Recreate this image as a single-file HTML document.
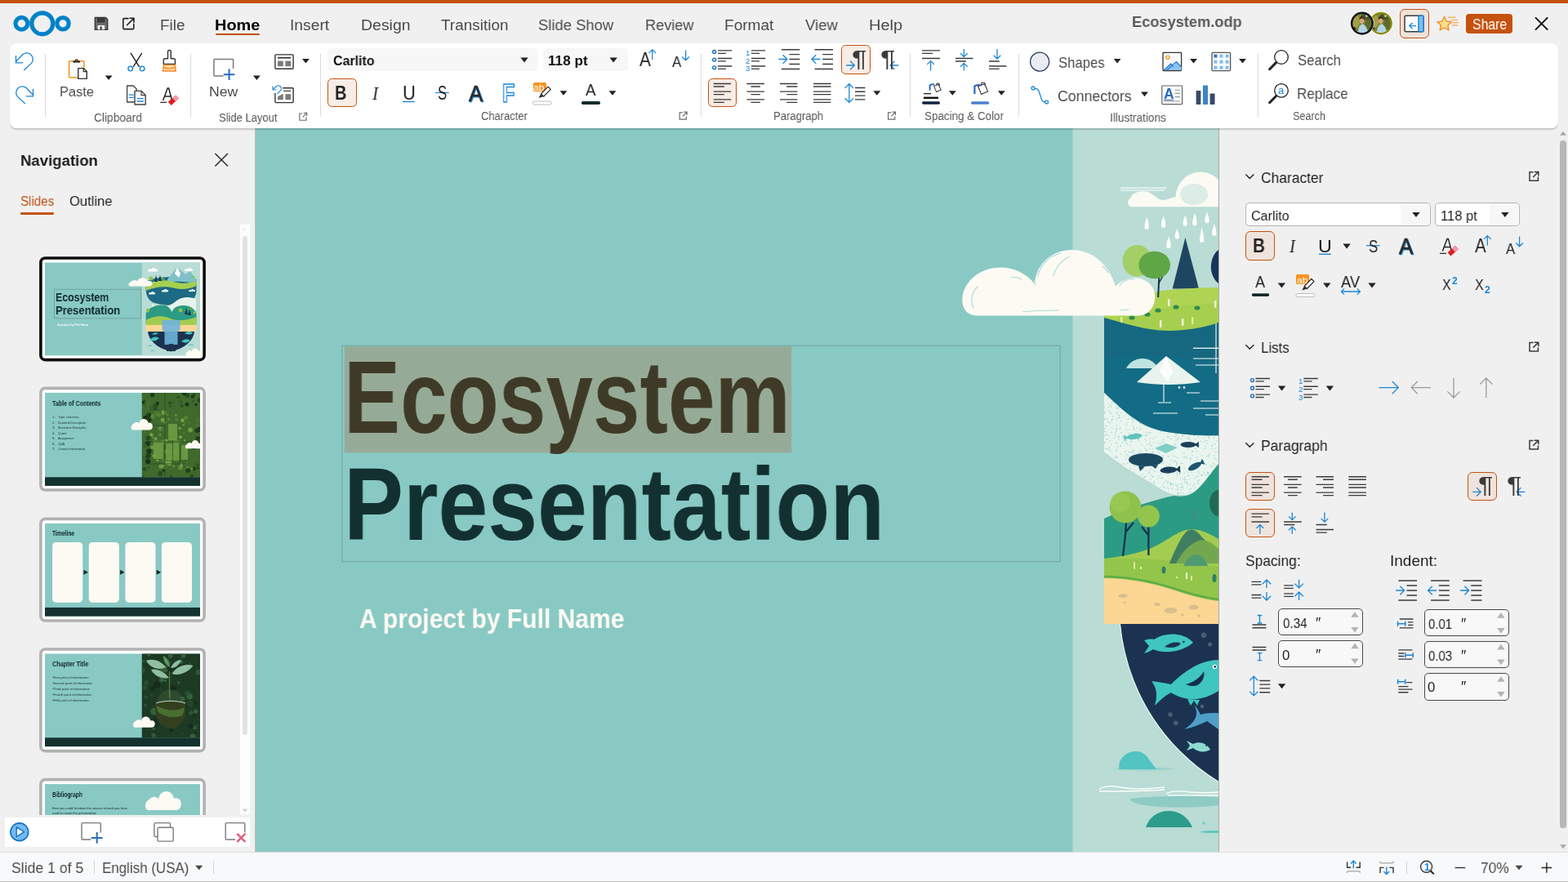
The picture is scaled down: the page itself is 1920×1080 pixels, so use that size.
<!DOCTYPE html>
<html lang="en"><head><meta charset="utf-8"><title>Ecosystem.odp</title>
<style>
html,body{margin:0;padding:0;}
body{width:1920px;height:1080px;overflow:hidden;background:#f0f0f0;position:relative;font-family:"Liberation Sans",sans-serif;}
.b{position:absolute;}
.t{position:absolute;white-space:nowrap;line-height:1;transform-origin:0 50%;z-index:10;will-change:transform;}
svg.ov{position:absolute;left:0;top:0;z-index:9;pointer-events:none;}
</style></head><body>
<div class="b" style="left:313px;top:157px;width:1179px;height:886px;overflow:hidden;background:#89c9c4;">
<svg width="1179" height="886" viewBox="313 157 1179 886" style="position:absolute;left:0;top:0;">
<rect x="1313.5" y="157" width="180" height="886" fill="#b9dcd5"/>
<g>
<path d="M1372 230.2h56.500M1372 233.200h54" stroke="#fff" stroke-width="1.200" fill="none" opacity=".85"/>
<path d="M1385.500 253.200c-5-.500-6-7-1.500-10.500c3-8 16-11 25-6c5 3 10 8 15.500 8.500c4 0 9-3.500 15-4c1-17 14-30.800 30-30.800c9 0 17 4 23 10v32.800z" fill="#fbfaf3"/>
<ellipse cx="1462" cy="238" rx="17" ry="13" fill="#cfe6e0" opacity=".7"/>
<path d="M1404.2 265.8c1.4 4.6 2.7 7.6 2.7 12.5a2.7 2.7 0 0 1 -5.4 0c0 -4.6 1.3 -7.6 2.7 -12.5z" fill="#fdfdf8"/>
<path d="M1424.6 264.3c1.4 4.4 2.7 7.3 2.7 12.0a2.7 2.7 0 0 1 -5.4 0c0 -4.4 1.3 -7.3 2.7 -12.0z" fill="#fdfdf8"/>
<path d="M1451.2 263.5c1.4 4.0 2.7 6.8 2.7 10.8a2.7 2.7 0 0 1 -5.4 0c0 -4.0 1.3 -6.8 2.7 -10.8z" fill="#fdfdf8"/>
<path d="M1462.9 260.4c1.4 4.8 2.7 8.1 2.7 13.4a2.7 2.7 0 0 1 -5.4 0c0 -4.8 1.3 -8.1 2.7 -13.4z" fill="#fdfdf8"/>
<path d="M1478 259.6c1.4 4.1 2.7 6.8 2.7 10.9a2.7 2.7 0 0 1 -5.4 0c0 -4.1 1.3 -6.8 2.7 -10.9z" fill="#fdfdf8"/>
<path d="M1486.8 274c1.4 4.4 2.7 7.4 2.7 12.1a2.7 2.7 0 0 1 -5.4 0c0 -4.4 1.3 -7.4 2.7 -12.1z" fill="#fdfdf8"/>
<path d="M1471.6 278.5c1.4 5.5 2.7 9.2 2.7 15.8a2.7 2.7 0 0 1 -5.4 0c0 -5.5 1.3 -9.2 2.7 -15.8z" fill="#fdfdf8"/>
<path d="M1441.3 280.4c1.4 3.7 2.7 6.2 2.7 9.6a2.7 2.7 0 0 1 -5.4 0c0 -3.7 1.3 -6.2 2.7 -9.6z" fill="#fdfdf8"/>
<path d="M1431 289c1.4 4.6 2.7 7.7 2.7 12.6a2.7 2.7 0 0 1 -5.4 0c0 -4.6 1.3 -7.7 2.7 -12.6z" fill="#fdfdf8"/>
<path d="M1451.4 291.1l16.6 62.3h-32.300z" fill="#1f4560"/>
<path d="M1492 306c-6 4-10 14-9 24c1 8 5 14 9 17z" fill="#17355a"/>
<path d="M1352 386c20-2 44-28 80-31c24-2 44-3 60-3v44c-30 10-60 12-84 8c-20-3-40-10-56-14z" fill="#a7cf4f"/>
<path d="M1352 386c20-2 44-28 80-31c24-2 44-3 60-3v20c-50 0-100 10-140 24z" fill="#b4d556" opacity=".6"/>
<path d="M1419.5 336l-1.4 28" stroke="#14304e" stroke-width="2" fill="none"/><path d="M1419.5 346l5-9" stroke="#14304e" stroke-width="1.4" fill="none"/>
<ellipse cx="1392.500" cy="319.300" rx="17.900" ry="19.400" fill="#a3cf66"/>
<ellipse cx="1413.700" cy="324.500" rx="19.300" ry="16.800" fill="#5ea646"/>
<rect x="1374" y="366" width="2.4" height="9" rx="1.2" fill="#f7f6dc"/>
<rect x="1403" y="365" width="2.4" height="9" rx="1.2" fill="#f7f6dc"/>
<rect x="1430" y="366" width="2.4" height="9" rx="1.2" fill="#f7f6dc"/>
<rect x="1487" y="368" width="2.4" height="9" rx="1.2" fill="#f7f6dc"/>
<rect x="1420" y="392" width="2.4" height="9" rx="1.2" fill="#f7f6dc"/>
<rect x="1447" y="390" width="2.4" height="9" rx="1.2" fill="#f7f6dc"/>
<rect x="1459" y="388" width="2.4" height="9" rx="1.2" fill="#e4ee9a"/>
<rect x="1372" y="388" width="2.4" height="9" rx="1.2" fill="#e4ee9a"/>
<ellipse cx="1386" cy="389" rx="3.6" ry="2.6" fill="#2f8a52"/>
<ellipse cx="1418" cy="380" rx="3.6" ry="2.6" fill="#2f8a52"/>
<ellipse cx="1440" cy="376" rx="3.6" ry="2.6" fill="#2f8a52"/>
<ellipse cx="1466" cy="377" rx="3.6" ry="2.6" fill="#2f8a52"/>
<ellipse cx="1405" cy="385" rx="3.6" ry="2.6" fill="#2f8a52"/>
<path d="M1352 470h140v99.200c-6 8-12 18-19.800 25.200c-6 6-10 9.500-15.500 10.600c-5 1-10 1.500-15.700 1c-8-1-16-4.500-23.200-9.600c-14-8-26-16-38.900-23.400c-10-7-18-13-26.900-19.400z" fill="#e9f5ee"/>
<clipPath id="spk"><path d="M1352 470h140v99.200c-6 8-12 18-19.800 25.200c-6 6-10 9.500-15.500 10.600c-5 1-10 1.500-15.700 1c-8-1-16-4.500-23.200-9.600c-14-8-26-16-38.900-23.400c-10-7-18-13-26.900-19.400z"/></clipPath>
<path clip-path="url(#spk)" d="M1397.3 499.0h1M1443.1 489.1h1M1427.0 526.1h1M1360.1 543.9h1M1357.2 534.6h1M1361.8 491.4h1M1411.4 584.2h1M1369.3 508.1h1M1439.8 599.4h1M1432.8 530.0h1M1488.7 485.9h1M1472.2 516.5h1M1372.2 494.8h1M1395.2 582.8h1M1377.3 553.3h1M1441.4 526.9h1M1428.7 487.9h1M1360.3 506.0h1M1447.3 533.9h1M1396.0 553.8h1M1415.4 517.8h1M1463.2 568.1h1M1386.2 552.4h1M1425.5 590.3h1M1454.1 516.3h1M1489.2 494.9h1M1410.5 575.4h1M1373.3 541.6h1M1357.5 564.2h1M1459.0 552.2h1M1474.6 519.5h1M1449.3 554.9h1M1433.2 537.5h1M1469.6 599.0h1M1418.4 563.7h1M1360.5 568.4h1M1442.6 605.1h1M1467.1 515.9h1M1406.0 564.3h1M1355.2 538.2h1M1375.5 494.8h1M1360.3 576.8h1M1370.1 511.2h1M1406.7 589.8h1M1363.3 536.6h1M1428.9 591.3h1M1466.7 588.9h1M1391.0 532.3h1M1402.2 591.4h1M1486.1 499.0h1M1376.7 509.2h1M1384.7 541.1h1M1434.5 513.1h1M1352.6 532.8h1M1403.7 551.4h1M1485.4 567.0h1M1424.2 557.8h1M1446.7 486.8h1M1477.9 578.3h1M1474.4 580.5h1M1406.9 530.3h1M1366.5 559.9h1M1360.7 488.5h1M1381.2 500.5h1M1399.6 486.6h1M1352.0 499.1h1M1366.2 525.8h1M1355.6 590.2h1M1438.0 498.7h1M1387.3 523.8h1M1403.0 495.5h1M1470.9 605.1h1M1417.2 541.0h1M1364.0 492.9h1M1400.0 513.4h1M1468.0 500.3h1M1355.2 599.8h1M1426.0 498.5h1M1428.0 483.4h1M1425.9 603.3h1M1472.9 567.7h1M1388.6 526.2h1M1375.4 577.3h1M1426.6 578.2h1M1398.2 508.1h1M1465.6 604.1h1M1471.4 581.6h1M1466.6 573.2h1M1383.7 545.2h1M1401.8 483.7h1M1355.9 515.2h1M1388.3 567.3h1M1485.9 536.4h1M1483.2 604.5h1M1485.7 525.9h1M1382.9 508.6h1M1379.5 505.8h1M1439.4 593.4h1M1469.7 540.4h1M1443.4 580.8h1M1363.9 563.2h1M1479.4 578.6h1M1457.0 540.2h1M1377.0 579.4h1M1398.6 580.9h1M1488.0 529.9h1M1408.2 599.3h1M1453.5 501.4h1M1369.8 499.0h1M1478.7 581.6h1M1372.5 584.1h1M1489.2 562.8h1M1401.1 549.1h1M1370.3 481.8h1M1487.9 561.9h1M1425.7 597.6h1M1412.7 589.8h1M1467.7 506.6h1M1387.3 516.9h1M1385.7 553.9h1M1388.3 532.8h1M1370.4 594.7h1M1401.5 537.7h1M1433.7 593.9h1M1410.9 595.6h1M1422.2 547.0h1M1425.3 482.4h1M1413.6 503.1h1M1352.6 580.7h1M1376.1 539.7h1M1453.5 550.1h1M1397.6 545.3h1M1429.8 578.8h1M1366.9 550.6h1M1386.8 514.9h1M1460.1 544.0h1M1430.6 575.8h1M1479.7 535.8h1M1437.8 543.7h1M1423.7 567.3h1M1415.3 547.2h1M1418.9 598.6h1M1449.9 590.4h1M1483.9 512.7h1M1430.3 598.9h1M1469.6 497.3h1M1369.0 535.7h1M1362.2 510.3h1M1362.2 564.4h1M1461.8 593.0h1M1373.6 570.2h1M1444.4 498.0h1M1475.6 601.9h1M1382.7 600.0h1M1407.8 541.4h1M1490.6 584.9h1M1374.6 534.4h1M1424.2 522.7h1M1379.4 520.1h1M1453.1 482.5h1M1429.6 535.5h1M1354.5 521.8h1M1439.3 544.5h1M1361.0 604.1h1M1462.4 602.4h1M1366.7 513.5h1M1357.5 578.2h1M1389.9 496.3h1M1411.1 594.8h1M1466.7 512.6h1M1372.9 595.8h1M1431.9 568.3h1M1364.5 487.2h1M1448.3 533.6h1M1362.1 598.2h1M1440.8 581.0h1M1363.7 587.9h1M1361.3 588.7h1M1415.5 522.7h1M1429.4 596.8h1M1389.5 496.3h1M1425.8 510.0h1M1367.3 500.3h1M1359.1 505.4h1M1395.7 518.4h1M1458.3 516.5h1M1422.0 502.4h1M1400.6 482.3h1M1387.1 481.9h1M1454.6 549.4h1M1378.5 539.8h1M1482.8 493.4h1M1466.6 534.5h1M1421.3 585.2h1M1407.0 543.8h1M1448.3 603.8h1M1400.0 584.9h1M1450.9 560.1h1M1408.7 523.8h1M1359.6 496.4h1M1361.9 573.4h1M1387.8 500.6h1M1363.8 586.0h1M1473.9 564.5h1M1391.5 510.5h1M1393.0 537.9h1M1374.1 536.2h1M1388.9 601.2h1M1488.2 548.9h1M1386.2 601.7h1M1395.3 524.9h1M1352.1 528.1h1M1418.5 543.3h1M1380.1 543.6h1M1352.7 513.3h1M1364.6 530.3h1M1357.8 482.8h1M1394.6 509.3h1M1434.0 546.7h1M1457.1 562.9h1M1452.2 590.8h1M1406.5 521.1h1M1489.9 498.8h1M1453.4 561.0h1M1358.1 585.2h1M1476.9 559.0h1M1454.7 582.3h1M1371.5 546.0h1M1422.6 585.2h1M1464.7 584.1h1M1433.8 592.5h1M1447.6 567.4h1M1384.2 483.9h1M1370.6 525.4h1M1366.7 585.3h1M1430.2 559.1h1M1439.7 565.8h1M1420.5 480.4h1M1463.7 574.3h1M1422.4 547.4h1M1444.3 488.3h1M1455.2 511.8h1M1362.4 513.5h1M1454.1 505.9h1M1455.6 602.9h1M1421.2 528.2h1M1419.1 566.1h1M1459.4 557.7h1M1442.0 489.8h1M1372.6 512.0h1M1456.1 518.4h1M1431.5 481.6h1M1360.5 513.9h1M1446.1 567.2h1M1446.6 516.6h1M1424.3 538.5h1M1417.3 494.9h1M1477.1 505.1h1M1488.9 598.0h1M1354.5 537.8h1M1466.8 602.0h1M1414.9 513.9h1M1381.4 599.1h1M1381.5 553.3h1M1371.8 546.0h1M1485.4 496.7h1M1466.8 544.1h1M1476.2 568.6h1M1384.4 593.1h1M1420.1 483.1h1M1352.5 542.0h1M1415.1 518.0h1M1371.7 523.3h1M1396.3 585.9h1M1352.2 574.6h1M1469.5 495.1h1M1481.7 569.8h1M1478.2 516.5h1M1404.1 529.5h1M1491.8 554.2h1M1402.5 533.9h1M1390.5 486.1h1M1366.2 585.2h1M1392.0 597.9h1M1386.9 513.5h1M1423.5 503.9h1M1404.3 600.5h1M1475.8 582.3h1M1440.3 595.1h1M1483.7 549.2h1M1452.7 486.2h1M1454.5 536.8h1M1457.4 561.2h1M1392.1 486.2h1M1481.7 496.0h1M1418.1 523.3h1M1393.7 573.1h1M1488.7 512.8h1M1443.8 517.9h1M1430.0 529.7h1M1375.4 500.4h1M1381.1 594.2h1M1421.6 507.7h1M1478.9 605.6h1M1415.0 497.6h1M1378.9 491.4h1M1399.9 491.5h1M1385.5 512.6h1M1431.7 591.8h1M1457.0 532.0h1M1409.9 546.0h1M1404.8 522.6h1M1360.7 515.0h1M1487.5 495.9h1M1422.5 559.3h1M1472.8 507.2h1M1389.9 511.3h1M1408.0 536.2h1M1485.6 586.9h1M1474.2 482.7h1M1356.5 569.4h1M1477.4 539.6h1M1434.2 480.0h1M1406.8 596.8h1M1467.6 587.8h1M1488.1 511.3h1M1367.3 499.5h1M1425.1 565.9h1M1483.8 570.9h1M1442.6 576.4h1M1416.0 549.5h1M1357.5 578.6h1M1384.6 595.9h1M1442.4 518.3h1M1369.9 511.7h1M1441.1 568.0h1M1367.7 488.9h1M1425.4 553.4h1M1406.3 508.2h1M1436.1 481.3h1M1394.2 538.0h1M1486.3 561.2h1M1475.7 539.9h1M1384.9 511.1h1M1486.5 568.8h1M1395.0 482.7h1M1421.8 565.0h1M1410.8 512.4h1M1445.4 596.6h1M1383.8 484.3h1M1399.3 533.0h1M1447.6 505.0h1M1463.6 573.1h1M1422.7 505.9h1M1487.8 519.3h1M1466.8 509.1h1M1383.0 575.8h1M1393.3 599.9h1M1421.4 503.6h1M1383.3 532.5h1M1445.1 599.5h1M1372.5 529.6h1M1381.8 602.7h1M1371.9 486.5h1M1360.4 529.6h1M1477.7 591.3h1M1454.6 605.7h1M1482.4 521.5h1M1378.0 597.9h1M1456.5 484.0h1M1445.0 527.7h1M1404.3 521.8h1M1375.7 480.4h1M1391.2 524.3h1M1485.8 495.6h1M1487.0 506.1h1M1401.9 583.5h1M1467.1 534.5h1M1358.9 539.7h1M1404.2 595.9h1M1379.0 525.9h1M1477.6 483.8h1M1409.5 582.3h1M1459.3 485.1h1M1356.9 487.9h1M1480.8 512.4h1M1456.6 593.2h1M1399.5 514.3h1M1486.1 557.7h1M1388.7 570.3h1M1396.3 514.7h1M1352.5 575.2h1M1480.3 559.9h1M1484.1 483.1h1M1384.7 539.9h1M1485.9 600.2h1M1406.1 511.6h1M1412.2 542.2h1M1481.9 503.1h1M1464.4 573.0h1M1467.2 577.4h1M1437.0 521.3h1M1396.7 525.6h1M1461.5 490.0h1M1379.6 574.9h1M1386.6 488.2h1M1356.7 549.6h1M1397.6 603.5h1M1475.7 604.5h1M1389.1 490.6h1M1365.5 542.8h1M1451.4 536.3h1M1384.8 532.5h1M1438.8 564.9h1M1456.7 586.7h1M1445.0 495.3h1M1469.7 517.0h1M1431.4 527.0h1M1455.3 505.1h1M1386.6 510.9h1M1373.5 591.4h1M1433.0 521.1h1M1407.4 605.0h1M1423.0 509.2h1M1465.2 562.3h1M1490.7 492.9h1M1418.5 583.2h1M1469.7 595.2h1M1357.7 517.0h1M1368.7 503.9h1M1488.2 553.5h1M1482.2 526.9h1M1473.3 536.6h1M1388.4 578.0h1M1484.4 493.3h1M1435.5 558.1h1M1382.5 526.5h1M1371.8 505.7h1M1387.7 555.5h1M1443.2 505.6h1M1353.6 521.2h1M1447.0 503.3h1M1395.7 505.6h1M1463.3 549.1h1M1360.9 492.8h1M1407.3 549.3h1M1441.5 491.5h1M1374.9 567.6h1M1409.4 515.7h1M1395.1 600.1h1M1395.7 551.4h1M1402.0 532.5h1M1473.0 605.6h1M1402.9 504.8h1M1453.9 505.7h1M1352.8 593.6h1M1411.3 583.4h1M1408.9 591.2h1M1416.5 500.5h1M1354.1 549.5h1M1441.7 594.6h1M1364.5 558.4h1M1403.9 543.6h1M1372.4 515.7h1M1425.0 596.6h1M1367.2 541.8h1M1464.7 601.8h1M1379.6 496.0h1M1484.0 602.9h1M1419.6 486.7h1M1481.7 528.9h1M1478.6 558.2h1M1467.4 500.2h1M1462.0 508.0h1M1408.6 586.6h1M1468.1 503.1h1M1382.5 530.4h1M1424.5 528.3h1M1369.2 511.1h1M1453.5 593.1h1M1357.8 550.9h1M1458.0 484.8h1M1469.3 494.8h1M1435.9 549.3h1M1439.8 518.6h1M1410.8 553.4h1M1411.6 563.0h1M1414.6 535.2h1M1355.3 558.0h1M1420.5 509.6h1M1458.9 578.3h1M1416.2 502.6h1M1418.3 493.5h1M1370.0 534.3h1M1364.8 535.7h1M1423.4 485.1h1M1441.1 490.4h1M1454.7 578.0h1M1423.6 486.8h1M1422.5 527.6h1M1485.1 497.2h1M1472.0 605.5h1M1454.5 582.7h1M1379.1 603.7h1M1420.9 600.5h1M1480.2 500.8h1M1462.4 597.3h1M1361.2 524.2h1M1457.9 500.0h1M1477.5 514.6h1M1466.2 498.1h1M1422.3 595.9h1M1381.2 513.1h1M1422.8 520.2h1M1357.2 502.9h1M1374.6 598.0h1M1447.2 592.8h1M1375.6 578.9h1M1368.1 546.9h1M1441.1 525.3h1M1474.2 550.0h1M1433.2 591.2h1M1366.6 605.1h1M1440.2 529.7h1M1463.7 513.4h1M1490.7 552.7h1M1402.4 576.3h1M1413.9 502.3h1M1456.1 486.1h1M1466.8 512.0h1M1441.5 604.0h1M1434.0 563.6h1M1395.8 480.2h1M1356.7 498.8h1M1438.2 534.5h1M1423.8 592.8h1M1370.5 508.6h1M1443.4 482.8h1M1352.4 524.7h1M1366.9 525.0h1M1383.4 553.5h1M1434.5 505.7h1M1439.4 539.8h1M1370.9 598.0h1M1386.1 498.8h1M1365.4 560.4h1M1474.0 578.6h1M1408.3 513.3h1M1353.6 561.3h1M1430.7 524.1h1M1442.4 535.9h1M1483.2 572.4h1M1386.8 593.8h1M1358.2 547.0h1M1408.8 509.9h1M1360.2 578.1h1M1353.7 549.4h1M1483.7 497.9h1M1379.9 556.6h1M1423.0 560.8h1M1465.9 502.0h1M1395.3 517.8h1M1358.8 592.1h1M1461.6 570.1h1M1352.9 586.4h1M1456.3 538.6h1M1455.8 537.0h1M1383.6 493.3h1M1384.5 484.9h1M1399.0 574.5h1M1449.3 586.5h1M1451.6 513.5h1M1429.5 534.9h1M1462.4 545.9h1M1389.1 560.9h1M1487.1 507.3h1M1475.2 481.9h1M1388.5 509.7h1M1456.1 599.0h1M1456.5 521.2h1M1475.2 521.4h1M1385.5 594.4h1M1440.3 567.3h1M1445.1 603.4h1M1417.7 585.8h1M1449.7 588.0h1M1413.2 571.3h1M1431.8 518.8h1M1381.7 558.5h1M1362.9 594.8h1M1372.2 483.4h1M1366.9 597.0h1M1400.3 497.9h1M1356.0 485.2h1M1449.0 559.9h1M1449.6 572.8h1M1361.2 554.4h1M1402.9 583.0h1M1466.7 592.3h1M1361.2 589.3h1M1480.0 599.0h1M1367.0 505.9h1M1367.7 484.3h1M1470.7 582.3h1M1440.8 584.0h1M1440.4 516.2h1M1366.0 492.3h1M1458.0 505.8h1M1396.7 533.4h1M1354.9 512.3h1M1391.6 570.2h1M1403.5 520.4h1M1487.0 543.5h1M1471.2 557.9h1M1356.3 532.0h1M1413.1 577.4h1M1400.5 568.8h1M1427.3 507.3h1M1472.7 491.5h1M1466.8 501.5h1M1352.2 505.5h1M1458.7 603.2h1M1352.6 541.8h1M1420.8 580.4h1M1377.8 542.3h1M1400.6 584.8h1M1388.5 598.9h1M1391.7 507.1h1M1449.9 542.8h1M1367.4 560.2h1M1363.3 579.3h1M1449.6 579.2h1M1439.9 524.8h1M1408.2 529.7h1M1476.7 490.9h1M1476.4 483.2h1M1380.9 513.2h1M1478.2 543.1h1M1405.1 591.4h1M1384.7 538.1h1M1426.4 575.1h1M1457.4 561.4h1M1400.8 521.2h1M1373.7 586.2h1M1444.7 573.5h1M1375.7 535.3h1M1460.3 553.0h1M1369.6 538.2h1M1475.9 510.0h1M1378.8 518.0h1M1450.4 586.3h1M1373.6 499.7h1M1386.7 521.1h1M1425.1 500.3h1M1397.9 503.8h1M1488.5 571.8h1M1366.3 601.3h1M1366.2 528.4h1M1489.7 580.2h1M1454.7 534.8h1M1379.5 560.4h1M1367.0 506.0h1M1406.4 484.3h1M1407.9 579.7h1M1449.1 543.1h1M1440.5 538.4h1M1371.9 556.1h1M1408.7 573.4h1M1479.1 534.2h1M1432.4 574.4h1M1411.0 508.8h1M1453.1 590.9h1M1460.4 568.2h1M1471.3 565.6h1M1441.8 537.2h1M1395.8 559.2h1M1365.7 532.9h1M1461.5 569.9h1M1440.1 511.5h1M1411.3 537.4h1M1439.0 531.6h1M1446.5 597.2h1M1377.6 562.5h1M1460.9 529.0h1M1420.6 602.8h1M1357.3 548.5h1M1374.5 578.5h1M1483.7 545.4h1M1366.2 552.4h1M1427.7 570.4h1M1423.7 560.5h1M1468.1 545.7h1M1409.4 599.4h1M1381.4 566.2h1M1406.9 576.1h1M1369.1 604.0h1M1401.8 487.1h1M1390.4 530.4h1M1353.9 532.7h1M1410.9 568.0h1M1401.3 513.4h1M1383.4 573.4h1M1483.6 546.4h1M1382.6 581.0h1M1406.9 506.7h1M1370.1 577.9h1M1465.3 559.9h1M1417.7 550.8h1M1383.6 601.4h1M1401.4 560.5h1M1466.6 582.8h1M1417.5 517.1h1M1428.8 495.8h1M1468.7 524.7h1M1471.1 513.7h1M1404.7 511.9h1M1411.7 503.4h1M1352.4 570.9h1M1391.4 510.9h1M1394.3 540.4h1M1412.0 560.3h1M1444.3 525.7h1M1482.0 587.7h1M1360.0 584.3h1M1478.8 578.8h1M1371.7 584.7h1M1440.6 481.9h1M1353.6 599.9h1M1443.8 511.5h1M1366.2 498.0h1M1384.7 577.8h1M1400.5 499.2h1M1478.6 579.8h1M1375.5 592.3h1M1437.2 578.4h1M1445.6 592.6h1M1462.3 585.7h1M1379.6 567.3h1M1426.3 573.5h1M1413.4 591.2h1M1429.7 513.3h1M1384.8 497.6h1M1421.0 487.4h1M1417.4 498.2h1M1420.8 542.8h1M1427.5 588.7h1M1352.9 585.9h1M1417.5 550.9h1M1445.1 585.9h1M1404.5 532.8h1M1486.5 489.5h1M1441.2 560.2h1M1356.0 556.8h1M1447.6 597.4h1M1398.3 603.7h1M1423.5 541.1h1M1477.7 484.3h1M1452.5 558.8h1M1399.4 588.6h1M1403.3 539.8h1M1425.6 577.1h1M1381.5 534.8h1M1411.1 549.8h1M1467.7 516.9h1M1467.9 530.9h1M1422.5 514.2h1M1422.9 602.8h1M1443.6 579.8h1M1398.3 520.0h1M1393.9 553.9h1M1440.9 578.8h1M1357.6 571.1h1M1476.0 548.7h1M1359.0 517.9h1M1352.9 503.9h1M1481.0 556.7h1M1444.1 579.4h1M1479.4 557.1h1M1438.3 559.0h1M1449.5 555.1h1M1447.3 506.8h1M1445.4 537.7h1M1458.8 492.8h1M1377.4 484.7h1M1460.4 595.2h1M1443.8 526.5h1M1467.2 579.1h1M1430.7 512.5h1M1394.3 533.1h1M1396.6 534.3h1M1441.8 597.7h1M1359.6 551.5h1M1357.5 495.0h1M1465.4 552.5h1M1480.6 536.3h1M1354.0 528.8h1M1434.9 598.2h1M1489.3 539.9h1M1409.7 492.9h1M1442.2 506.7h1M1373.2 482.0h1M1352.7 566.2h1M1369.0 601.8h1M1364.3 589.6h1M1370.1 482.2h1M1452.7 510.5h1M1454.7 503.6h1M1359.0 577.5h1M1451.9 587.8h1M1454.2 490.6h1M1440.0 569.4h1M1416.5 597.5h1M1387.6 601.5h1M1452.4 481.4h1M1354.1 562.0h1M1466.4 490.0h1M1395.5 571.9h1M1375.2 588.5h1M1420.1 487.5h1M1403.5 552.4h1M1413.4 565.3h1M1372.3 580.5h1M1402.9 561.3h1M1440.2 532.7h1M1406.0 579.1h1M1484.3 578.9h1M1431.4 516.8h1M1360.5 602.7h1M1450.5 584.3h1M1398.5 556.3h1M1488.8 584.7h1M1436.2 518.9h1M1412.0 591.9h1M1404.7 566.3h1M1436.2 592.9h1M1465.0 515.7h1M1352.2 513.1h1M1411.2 553.9h1M1466.2 591.8h1M1357.9 585.0h1M1465.6 589.3h1M1432.1 514.5h1M1471.2 581.7h1M1447.8 595.1h1M1400.6 490.7h1M1429.5 580.5h1M1380.1 574.5h1M1482.4 509.5h1M1437.0 565.4h1M1417.1 506.0h1M1387.7 574.6h1M1462.8 537.9h1M1364.3 581.6h1M1460.1 509.3h1M1433.1 593.0h1M1475.9 545.8h1M1418.7 554.3h1M1378.5 504.2h1M1377.3 568.3h1M1402.8 551.1h1M1408.3 545.2h1M1372.9 485.6h1M1491.6 527.1h1M1366.9 559.7h1M1462.2 499.7h1M1435.6 523.5h1M1424.7 482.6h1M1356.7 604.8h1M1473.3 541.3h1M1431.4 513.0h1M1461.1 533.7h1M1484.5 576.7h1M1466.6 601.4h1M1387.6 484.8h1M1380.1 502.8h1M1363.7 486.4h1M1430.0 589.7h1M1416.2 599.3h1M1479.4 488.1h1M1435.7 530.1h1M1368.8 600.9h1M1388.0 551.1h1M1441.7 600.5h1M1445.8 529.5h1M1414.8 500.1h1M1487.2 605.0h1M1383.0 484.9h1M1387.8 524.4h1M1478.4 594.0h1M1469.2 485.9h1M1462.1 569.4h1M1442.5 604.2h1M1359.8 498.2h1M1457.7 598.4h1M1446.8 517.6h1M1434.8 575.5h1M1366.8 520.8h1M1388.0 495.6h1M1419.4 501.2h1M1385.4 498.0h1" stroke="#7fc6c0" stroke-width="1" fill="none"/>
<path d="M1352 389c16 4 36 11 56 14c24 4 54 2 84-8L1492 533.200C1480 533.500 1468 533.200 1456.700 532.200C1443 531 1430 529.500 1417.800 526.400C1402 522 1390 514 1378.900 505C1368 496 1360 488 1352 480.700z" fill="#156880"/>
<path d="M1352 440c40-6 90-4 140 4L1492 533.200C1480 533.500 1468 533.200 1456.700 532.200C1443 531 1430 529.500 1417.800 526.400C1402 522 1390 514 1378.900 505C1368 496 1360 488 1352 480.700z" fill="#127089" opacity=".55"/>
<path d="M1379 451c4-8 12-12 20-12c8 0 15 4 19 12z" fill="#bfe3e0"/>
<path d="M1392 468l36-32l42 32c-26 4-52 4-78 0z" fill="#e9f4ee"/>
<path d="M1428 436l8 20l-6 12l-10-14z" fill="#fff" opacity=".8"/>
<g stroke="#f4fbf8" fill="none" stroke-width="1.1"><path d="M1461 426.4h31M1461 439h31M1464 447h28M1489 396v61M1425 470v22M1418 493h16M1453 481h16M1470 491h22M1461 500h31M1476 508h16M1412 506h30"/></g>
<circle cx="1444" cy="474.5" r="1.3" fill="#fff"/><circle cx="1450" cy="474.5" r="1.3" fill="#fff"/>
<ellipse cx="1403" cy="563" rx="21" ry="8" fill="#1b4a63"/><path d="M1394 570l2 7l6-6zM1410 570l5 4l3-5z" fill="#1b4a63"/>
<g transform="rotate(0 1455 544.5)"><ellipse cx="1455" cy="544.5" rx="9.5" ry="3.4" fill="#1b3f5a"/><path d="M1462.6 544.5l5.2 -3.7v7.5z" fill="#1b3f5a"/></g>
<g transform="rotate(-4 1431 575.5)"><ellipse cx="1431" cy="575.5" rx="10.5" ry="4" fill="#1b3f5a"/><path d="M1439.4 575.5l5.8 -4.4v8.8z" fill="#1b3f5a"/></g>
<g transform="rotate(-28 1463 571)"><ellipse cx="1463" cy="571" rx="9" ry="3.6" fill="#1f5570"/><path d="M1470.2 571l5.0 -4.0v7.9z" fill="#1f5570"/></g>
<g transform="rotate(-8 1389 534.5)"><ellipse cx="1389" cy="534.5" rx="9.5" ry="3.4" fill="#63c1bd"/><path d="M1381.4 534.5l-5.2 -3.7v7.5z" fill="#63c1bd"/></g>
<path d="M1414 549l14-6l14 5l-14 7z" fill="#7fcfc6"/>
<path d="M1352 635c16-8 32-14 48-18c14-4 26-8 38-10c6 1 12 1 18-1c14-6 24-24 36-38v140h-140z" fill="#2c9b83"/>
<ellipse cx="1492" cy="616" rx="11" ry="16" fill="#1f6b55"/>
<path d="M1461.5 621c1.6 4 2 8 2 14h-4c0-6 .4-10 2-14z" fill="#3f8c8a"/>
<path d="M1352 684c20-2 40-6 58-13c16-7 28-18 42-22c12-3 26 2 40 11v78h-140z" fill="#a3cd50"/>
<path d="M1352 684c40-2 90 2 140 10v44h-140z" fill="#8fc349" opacity=".8"/>
<path d="M1432 690c6-14 14-34 22-40c6-4 12 0 18 8c6 6 12 10 20 14v18z" fill="#3f7e62"/>
<path d="M1440 690c6-12 16-24 28-28c10-3 18 4 24 10v18z" fill="#7cae4c" opacity=".85"/>
<path d="M1449 693c4-8 10-14 16-14c6 0 10 6 14 14z" fill="#4f9a74"/>
<g stroke="#14304e" fill="none" stroke-width="2.2"><path d="M1379 637c0 14-2 28-4 44M1378 652l10-12M1406.4 641v39M1406 655l-8-10"/></g>
<circle cx="1378" cy="621" r="19.4" fill="#8fc24c"/><circle cx="1406.4" cy="632" r="13.4" fill="#93c54d"/>
<circle cx="1372" cy="615" r="12" fill="#9dcb55" opacity=".7"/>
<rect x="1388" y="688" width="2" height="9" rx="1" fill="#dfeb9a"/>
<rect x="1396" y="694" width="2" height="3" rx="1" fill="#f4f6d8"/>
<rect x="1452" y="701" width="2" height="8" rx="1" fill="#f4f6d8"/>
<rect x="1458" y="705" width="2" height="6" rx="1" fill="#dfeb9a"/>
<rect x="1440" y="706" width="2" height="2" rx="1" fill="#f4f6d8"/>
<ellipse cx="1425" cy="698" rx="2.4" ry="4.4" fill="#2f7f66"/><ellipse cx="1487" cy="708" rx="2.6" ry="5" fill="#2f7f66"/>
<path d="M1352 708c30 0 60 6 90 16c18 6 34 10 50 12v28h-140z" fill="#fcd793"/>
<path d="M1352 706c30 0 60 6 90 16c18 6 34 10 50 12" stroke="#5fae48" stroke-width="2.4" fill="none"/>
<ellipse cx="1375" cy="729.5" rx="5.6" ry="2.6" fill="#d9bf8c"/>
<ellipse cx="1417" cy="740" rx="4" ry="2" fill="#d9bf8c"/>
<ellipse cx="1433.5" cy="747.5" rx="8" ry="3.6" fill="#d9bf8c"/>
<ellipse cx="1461.6" cy="743.6" rx="6" ry="3" fill="#d9bf8c"/>
<ellipse cx="1377" cy="738" rx="2" ry="1.2" fill="#d9bf8c"/>
<ellipse cx="1448" cy="753" rx="2" ry="1.4" fill="#d9bf8c"/>
<ellipse cx="1468" cy="754" rx="2.4" ry="1.6" fill="#d9bf8c"/>
<clipPath id="bowl"><rect x="1352" y="764" width="140" height="279"/></clipPath>
<g clip-path="url(#bowl)"><circle cx="1624.3" cy="740.5" r="253.9" fill="#1b3350" stroke="#e8f6f0" stroke-width="1.2"/>
<circle cx="1474" cy="777.8" r="3.2" fill="#465f70"/>
<circle cx="1481.7" cy="789" r="2.6" fill="#465f70"/>
<circle cx="1433" cy="875" r="2.8" fill="#465f70"/>
<circle cx="1439.7" cy="885.3" r="2.8" fill="#465f70"/>
<circle cx="1472" cy="865" r="2.4" fill="#465f70"/>
<path d="M1401 784l6 7l-6 9c4-1 8-3 11-5c14 6 34 4 49-8c-10-12-32-14-48-4c-4-1-8 0-12 1z" fill="#3fc6c1"/><path d="M1434 782l4-6l4 5z" fill="#3fc6c1"/><path d="M1426 792c6-5 14-7 20-4c-4 5-12 6-20 4z" fill="#1b3350"/><circle cx="1449.4" cy="786" r="1.2" fill="#1b3350"/>
<path d="M1410 834c6 8 8 16 4 30c6-6 12-12 20-16c18 12 40 10 58-2v-38c-22 0-42 14-58 30c-8-2-16-3-24-4z" fill="#3fc6c1"/><path d="M1452 838c8-2 18-8 22-16c2 6-2 14-8 17c-4 2-10 1-14-1z" fill="#16304c"/><circle cx="1487.4" cy="816.4" r="2.6" fill="#fff"/><circle cx="1487.8" cy="816.4" r="1.3" fill="#16304c"/><path d="M1454 856l4 8l4-6l4 6l3-7z" fill="#3fc6c1"/>
<path d="M1462 863c6 10 4 20-12 30c10-2 20-6 28-10l14 10v-20c-8 0-16 0-22 2c-2-4-4-8-8-12z" fill="#4e9fc8"/>
<path d="M1453 907l4 6l-4 6l8-3c6 5 14 6 21 2c-4-8-14-11-21-7z" fill="#8bdccf"/><circle cx="1477" cy="913" r="1" fill="#16304c"/>
</g>
<path d="M1362.8 941.5c20-3 50-3 78 0c-20 3-56 3-78 0z" fill="#9fd3cc"/>
<path d="M1370.5 942c-2-12 8-22 20-22c10 0 14 6 18 12c4 5 6 8 8 10z" fill="#52c4c1"/>
<g stroke="#fdfdf8" fill="none" stroke-width="1.3"><path d="M1346 967c4-5 16-5 26-3c14 3 34 2 54 0M1346 969c20 0 50 0 80-2M1428 972c6-4 16-4 30-2c12 1 24 1 34 0M1430 974h62"/></g>
<path d="M1384 978c30-4 72-4 108-2v10c-30 4-76 4-100-2c-6-2-8-4-8-6z" fill="#8ecbc5"/>
<path d="M1403 1013c4-12 14-20 28-20c14 0 24 8 29 20z" fill="#2d9c8a"/>
<path d="M1468 1019c8-2 16-2 24-2v3c-8 0-16 0-24-1z" fill="#5ec6bf"/><circle cx="1474" cy="1008" r="1.6" fill="#5ec6bf"/>
</g>
<path d="M1196 386.5c-14 0-20-12-17-26c5-20 24-33 46-33c18 0 32 8 42 20c1-24 22-41.500 45-41.500c26 0 46 18 54 45c8-10 22-13 33-9c13 5 18 18 14 30c-3 9-11 14.500-19 14.500z" fill="#fdfaf4"/>
<g stroke="#a9dcd6" stroke-width="1.1" fill="none" stroke-linecap="round"><path d="M1197 351c-6 6-10 16-5 26M1238 339c5 0 9 1 13 3M1271 338c2-12 12-24 28-28M1290 338c2-10 10-20 20-24M1253 381.500c14-1 28-1.500 43-1.500M1350 326c3 2 5 5 7 8M1371 350c4-6 10-9 18-8M1372 380l10-1M1266 343l2 6"/></g>
<rect x="418.75" y="423.25" width="879.5" height="264.5" fill="none" stroke="#77a8a7" stroke-width="1.2"/>
<rect x="421.8" y="424.3" width="547.5" height="130" fill="#96ab97"/>
</svg>
</div>
<span class="t" style="left:421.03px;top:424px;font-size:125.4px;color:#3f3a27;font-weight:700;transform:scaleX(0.8254);">Ecosystem</span>
<span class="t" style="left:420.67px;top:555px;font-size:125.4px;color:#133030;font-weight:700;transform:scaleX(0.8717);">Presentation</span>
<span class="t" style="left:440.33px;top:742px;font-size:32.6px;color:#fdfaf3;font-weight:700;transform:scaleX(0.9224);">A project by Full Name</span>
<div class="b" style="left:0px;top:0px;width:1920px;height:4px;background:#c5520f;"></div>
<div class="b" style="left:0px;top:1043px;width:1920px;height:37px;background:#f8f9fa;border-top:1px solid #dcdcdc;box-sizing:border-box;"></div>
<div class="b" style="left:0px;top:1079px;width:1920px;height:1px;background:#b9b9b9;"></div>
<div class="b" style="left:312px;top:157px;width:1px;height:886px;background:#bdbdbd;"></div>
<div class="b" style="left:12px;top:52.6px;width:1896px;height:104.4px;background:#fff;border-radius:8px;box-shadow:0 1.6px 1.2px -.2px rgba(0,0,0,.17);z-index:5;"></div>
<div class="b" style="left:1492px;top:157px;width:1px;height:886px;background:#a9a9a9;"></div>
<span class="t" style="left:196.13px;top:22px;font-size:18.9px;color:#4a4a4a;transform:scaleX(0.9925);">File</span>
<span class="t" style="left:263.15px;top:22px;font-size:18.9px;color:#000;font-weight:700;transform:scaleX(1.0559);">Home</span>
<span class="t" style="left:355.49px;top:22px;font-size:18.9px;color:#4a4a4a;transform:scaleX(1.0206);">Insert</span>
<span class="t" style="left:441.78px;top:22px;font-size:18.9px;color:#4a4a4a;transform:scaleX(1.0303);">Design</span>
<span class="t" style="left:539.50px;top:22px;font-size:18.9px;color:#4a4a4a;transform:scaleX(1.0034);">Transition</span>
<span class="t" style="left:659.42px;top:22px;font-size:18.9px;color:#4a4a4a;transform:scaleX(0.9767);">Slide Show</span>
<span class="t" style="left:789.58px;top:22px;font-size:18.9px;color:#4a4a4a;transform:scaleX(0.9601);">Review</span>
<span class="t" style="left:886.51px;top:22px;font-size:18.9px;color:#4a4a4a;transform:scaleX(1.0095);">Format</span>
<span class="t" style="left:986.30px;top:22px;font-size:18.9px;color:#4a4a4a;transform:scaleX(0.9791);">View</span>
<span class="t" style="left:1063.74px;top:22px;font-size:18.9px;color:#4a4a4a;transform:scaleX(1.0566);">Help</span>
<div class="b" style="left:264px;top:41px;width:54.2px;height:2.4px;background:#c5520f;border-radius:1.2px;"></div>
<span class="t" style="left:1385.86px;top:18px;font-size:18.6px;color:#5a5a5a;font-weight:700;transform:scaleX(0.9801);">Ecosystem.odp</span>
<div class="b" style="left:1714px;top:10.9px;width:35.6px;height:35.8px;background:#efe3dc;border:1.5px solid #c5520f;border-radius:6px;box-sizing:border-box;"></div>
<div class="b" style="left:1795px;top:17px;width:56.5px;height:24px;background:#c5520f;border-radius:4px;"></div>
<span class="t" style="left:1802.51px;top:21px;font-size:18.6px;color:#fff;transform:scaleX(0.8489);">Share</span>
<span class="t" style="left:14.45px;top:1054px;font-size:18.9px;color:#4a4a4a;transform:scaleX(0.9334);">Slide 1 of 5</span>
<div class="b" style="left:115px;top:1054px;width:1px;height:16px;background:#d4d4d4;"></div>
<span class="t" style="left:125.38px;top:1054px;font-size:18.9px;color:#4a4a4a;transform:scaleX(0.8965);">English (USA)</span>
<div class="b" style="left:260.5px;top:1054px;width:1px;height:16px;background:#d4d4d4;"></div>
<div class="b" style="left:1722px;top:1054px;width:1px;height:16px;background:#d4d4d4;"></div>
<span class="t" style="left:1743.62px;top:1056px;font-size:12.4px;color:#1b86d9;font-weight:700;">1</span>
<span class="t" style="left:1813.48px;top:1054px;font-size:18.9px;color:#4a4a4a;transform:scaleX(0.9209);">70%</span>
<div class="b" style="left:55.2px;top:66px;width:1px;height:77px;background:#dcdcdc;z-index:6;"></div>
<span class="t" style="left:73.12px;top:104px;font-size:17.4px;color:#4a4a4a;transform:scaleX(0.9427);">Paste</span>
<span class="t" style="left:114.95px;top:137px;font-size:14.9px;color:#565656;transform:scaleX(0.9238);">Clipboard</span>
<div class="b" style="left:232.7px;top:66px;width:1px;height:77px;background:#dcdcdc;z-index:6;"></div>
<span class="t" style="left:255.52px;top:104px;font-size:17.4px;color:#4a4a4a;transform:scaleX(1.0130);">New</span>
<span class="t" style="left:268.39px;top:137px;font-size:14.9px;color:#565656;transform:scaleX(0.8726);">Slide Layout</span>
<div class="b" style="left:392.3px;top:66px;width:1px;height:77px;background:#dcdcdc;z-index:6;"></div>
<div class="b" style="left:401px;top:59.4px;width:258px;height:27.6px;background:#f7f7f7;border-radius:5px;z-index:6;"></div>
<span class="t" style="left:407.50px;top:66px;font-size:16.2px;color:#111;font-weight:700;transform:scaleX(0.9847);">Carlito</span>
<div class="b" style="left:665px;top:59.4px;width:103.8px;height:27.6px;background:#f7f7f7;border-radius:5px;z-index:6;"></div>
<span class="t" style="left:671.43px;top:66px;font-size:16.2px;color:#111;font-weight:700;transform:scaleX(1.0594);">118 pt</span>
<div class="b" style="left:401.2px;top:96.2px;width:35.4px;height:35.3px;background:#f7ece6;border:1.5px solid #c5520f;border-radius:5.5px;box-sizing:border-box;z-index:6;"></div>
<span class="t" style="left:410.16px;top:103px;font-size:23.6px;color:#222;font-weight:700;transform:scaleX(0.8407);">B</span>
<span class="t" style="left:455.93px;top:103px;font-size:23.6px;color:#222;font-style:italic;font-family:'Liberation Serif',serif;transform:scaleX(0.8895);">I</span>
<span class="t" style="left:492.53px;top:103px;font-size:23.4px;color:#222;transform:scaleX(0.9357);">U</span>
<span class="t" style="left:535.87px;top:103px;font-size:23.4px;color:#222;transform:scaleX(0.7197);">S</span>
<span class="t" style="left:575.40px;top:101px;font-size:28.4px;color:#1b86d9;transform:scaleX(0.9014);-webkit-text-stroke:.7px #1b86d9;">A</span>
<span class="t" style="left:574.00px;top:100px;font-size:28.4px;color:#2a2a2a;transform:scaleX(0.9014);-webkit-text-stroke:.7px #2a2a2a;">A</span>
<span class="t" style="left:614.82px;top:98.20px;font-size:32.0px;color:#fff;transform-origin:0 0;transform:scale(0.7879,1.0000);font-weight:700;-webkit-text-stroke:1.5px #1b86d9;">F</span>
<div class="b" style="left:652.5px;top:100.6px;width:16px;height:11.9px;background:#f7931e;border-radius:1.500px;z-index:6;"></div>
<span class="t" style="left:653.32px;top:102px;font-size:11.4px;color:#fff;transform:scaleX(1.0622);">ab</span>
<span class="t" style="left:717.30px;top:100px;font-size:20.6px;color:#222;transform:scaleX(0.9104);">A</span>
<div class="b" style="left:711.7px;top:124.2px;width:23.4px;height:3.4px;background:#0f2d2d;border-radius:1.700px;z-index:6;"></div>
<span class="t" style="left:588.79px;top:135px;font-size:14.9px;color:#565656;transform:scaleX(0.8693);">Character</span>
<span class="t" style="left:783.00px;top:62px;font-size:23.6px;color:#222;transform:scaleX(0.8829);">A</span>
<span class="t" style="left:823.00px;top:67px;font-size:18.2px;color:#222;transform:scaleX(0.9323);">A</span>
<div class="b" style="left:858.1px;top:66px;width:1px;height:77px;background:#dcdcdc;z-index:6;"></div>
<span class="t" style="left:912.80px;top:60px;font-size:9.6px;color:#1b86d9;">1</span>
<span class="t" style="left:912.95px;top:70px;font-size:9.6px;color:#1b86d9;">2</span>
<span class="t" style="left:913.10px;top:79px;font-size:9.6px;color:#1b86d9;">3</span>
<div class="b" style="left:1029.8px;top:55.3px;width:35.8px;height:35.7px;background:#f7ece6;border:1.5px solid #c5520f;border-radius:5.5px;box-sizing:border-box;z-index:6;"></div>
<span class="t" style="left:1042.93px;top:58.02px;font-size:27.9px;color:#3b3b3b;transform-origin:0 0;transform:scale(1.2311,0.9983);">¶</span>
<span class="t" style="left:1077.53px;top:58.02px;font-size:27.9px;color:#3b3b3b;transform-origin:0 0;transform:scale(1.2311,0.9983);">¶</span>
<div class="b" style="left:866.5px;top:96.2px;width:35.4px;height:35.3px;background:#f7ece6;border:1.5px solid #c5520f;border-radius:5.5px;box-sizing:border-box;z-index:6;"></div>
<span class="t" style="left:947.28px;top:135px;font-size:14.9px;color:#565656;transform:scaleX(0.8775);">Paragraph</span>
<div class="b" style="left:1114.0px;top:66px;width:1px;height:77px;background:#dcdcdc;z-index:6;"></div>
<span class="t" style="left:1132.08px;top:135px;font-size:14.9px;color:#565656;transform:scaleX(0.9008);">Spacing &amp; Color</span>
<div class="b" style="left:1247.0px;top:66px;width:1px;height:77px;background:#dcdcdc;z-index:6;"></div>
<span class="t" style="left:1295.78px;top:68px;font-size:18.4px;color:#4a4a4a;transform:scaleX(0.9077);">Shapes</span>
<span class="t" style="left:1295.47px;top:109px;font-size:18.4px;color:#4a4a4a;transform:scaleX(0.9638);">Connectors</span>
<span class="t" style="left:1359.23px;top:137px;font-size:14.9px;color:#565656;transform:scaleX(0.9155);">Illustrations</span>
<span class="t" style="left:1424.73px;top:107px;font-size:17.6px;color:#2a6cc0;font-weight:700;transform:scaleX(0.9917);">A</span>
<div class="b" style="left:1539.8px;top:66px;width:1px;height:77px;background:#dcdcdc;z-index:6;"></div>
<span class="t" style="left:1589.28px;top:65px;font-size:18.4px;color:#4a4a4a;transform:scaleX(0.9084);">Search</span>
<span class="t" style="left:1564.99px;top:104px;font-size:13px;color:#1b86d9;">a</span>
<span class="t" style="left:1588.47px;top:106px;font-size:18.4px;color:#4a4a4a;transform:scaleX(0.9277);">Replace</span>
<span class="t" style="left:1583.11px;top:135px;font-size:14.9px;color:#565656;transform:scaleX(0.8452);">Search</span>
<span class="t" style="left:24.64px;top:187px;font-size:19.2px;color:#1c1c1c;font-weight:700;transform:scaleX(0.9675);">Navigation</span>
<span class="t" style="left:24.83px;top:238px;font-size:17.4px;color:#c0500f;transform:scaleX(0.8682);">Slides</span>
<div class="b" style="left:25.2px;top:260.3px;width:40.9px;height:2.6px;background:#c5520f;border-radius:1.300px;"></div>
<span class="t" style="left:84.52px;top:238px;font-size:17.4px;color:#222;transform:scaleX(0.9513);">Outline</span>
<div class="b" style="left:294.2px;top:275px;width:11.6px;height:722px;background:#fdfdfd;"></div>
<div class="b" style="left:297px;top:289px;width:6.4px;height:611px;background:#e2e2e2;border-radius:3.200px;"></div>
<div class="b" style="left:0;top:300px;width:294px;height:698px;overflow:hidden;">
<svg width="294" height="698" viewBox="0 300 294 698" style="position:absolute;left:0;top:0;">
<rect x="49.900" y="316.0" width="200.200" height="124.600" rx="5.400" fill="#fff" stroke="#0c0c0c" stroke-width="3.600"/>
<rect x="55" y="321.5" width="190" height="113.800" fill="#89c9c4"/>
<rect x="49.900" y="475.4" width="200.200" height="124.600" rx="5.400" fill="#fff" stroke="#b1b1b1" stroke-width="3.600"/>
<rect x="55" y="480.9" width="190" height="113.800" fill="#89c9c4"/>
<rect x="49.900" y="635.4" width="200.200" height="124.600" rx="5.400" fill="#fff" stroke="#b1b1b1" stroke-width="3.600"/>
<rect x="55" y="640.9" width="190" height="113.800" fill="#89c9c4"/>
<rect x="49.900" y="795.0" width="200.200" height="124.600" rx="5.400" fill="#fff" stroke="#b1b1b1" stroke-width="3.600"/>
<rect x="55" y="800.5" width="190" height="113.800" fill="#89c9c4"/>
<rect x="49.900" y="954.6" width="200.200" height="124.600" rx="5.400" fill="#fff" stroke="#b1b1b1" stroke-width="3.600"/>
<rect x="55" y="960.1" width="190" height="113.800" fill="#89c9c4"/>
<rect x="173.750" y="321.5" width="71.250" height="113.800" fill="#b9dcd5"/>
<rect x="66.500" y="354.300" width="106" height="35.600" fill="none" stroke="#6f9f9e" stroke-width=".900"/>
<g>
<path d="M178.500 352c0-6 2-8 6-10c16-4 40-4 56 0v14c0 6-4 12-10 16c-14 4-32 2-44-2c-6-4-8-10-8-18z" fill="#1d6a84"/>
<path d="M205 342l12-15l10 9l6-4l8 12v4c-12-4-26-4-36-2z" fill="#7fc0c8"/><path d="M217 327l4 8l-2 5l-5-5z" fill="#fff"/>
<path d="M178.500 348c10-5 22-6 34-3c10 3 20 2 28-1v6c-8 4-18 5-26 3c-12-3-24-2-36 3z" fill="#a6cf4f"/>
<path d="M186 372c10 6 22 3 28-2c6-6 16-8 26-4v14c-10 4-20 0-28 2c-8 3-18 4-26-2z" fill="#e6f3ec"/>
<path d="M178.500 384c4-8 14-12 24-10c4 1 6 4 8 8c2-6 8-8 14-8c8 0 14 4 16 10v12h-62z" fill="#2c9b83"/>
<path d="M178.500 392c10-6 22-6 30-2c10 4 22 2 32-2v10h-62z" fill="#a3cd50"/>
<path d="M178.500 398h62v8h-62z" fill="#fcd793"/>
<path d="M181 406h57c-1 10-10 20-28.500 24.500c-18.500-4.500-27.500-14.500-28.500-24.500z" fill="#1b3350"/>
<path d="M198.500 392h22v12l-3 2v16h-16v-16l-3-2z" fill="#6fb4dc" opacity=".9"/>
<path d="M183 416q6-6 12-2q-6 6-12 2zM222 418q6-5 11-1q-5 5-11 1zM226 408q6-4 10 0q-4 3-10 0zM186 409q4-3 8-1q-4 3-8 1z" fill="#3fc6c1"/>
<path d="M204 430v-6h3v-3h5v3h3v6z" fill="#1b3350"/>
<circle cx="185" cy="341" r="2.6" fill="#8fc24c"/>
<circle cx="199" cy="342" r="2.4" fill="#5ea646"/>
<circle cx="237" cy="339" r="1.6" fill="#8fc24c"/>
<circle cx="181" cy="380" r="2.2" fill="#8fc24c"/>
<circle cx="221" cy="380" r="2.4" fill="#8fc24c"/>
<circle cx="238" cy="383" r="1.8" fill="#8fc24c"/>
<circle cx="233" cy="378" r="2" fill="#5ea646"/>
<path d="M189 345l2-8l2 8zM194 344l2-7l2 7zM226 385l2-8l2 8zM230 386l2-7l2 7z" fill="#17355a"/>
<path d="M181.96 332.50c-1.20 0 -1.44 -1.89 0.24 -2.48c0.96 -0.90 2.64 -0.90 3.36 -0.23c0.48 -2.25 4.56 -2.48 5.28 -0.09c1.44 -0.45 2.88 0.45 2.40 1.80c-0.24 0.63 -0.96 0.99 -1.68 0.99z" fill="#fff"/>
<path d="M226.80 332.00c-1.00 0 -1.20 -1.68 0.20 -2.20c0.80 -0.80 2.20 -0.80 2.80 -0.20c0.40 -2.00 3.80 -2.20 4.40 -0.08c1.20 -0.40 2.40 0.40 2.00 1.60c-0.20 0.56 -0.80 0.88 -1.40 0.88z" fill="#fff"/>
<path d="M182.64 360.50c-0.80 0 -0.96 -1.47 0.16 -1.93c0.64 -0.70 1.76 -0.70 2.24 -0.18c0.32 -1.75 3.04 -1.93 3.52 -0.07c0.96 -0.35 1.92 0.35 1.60 1.40c-0.16 0.49 -0.64 0.77 -1.12 0.77z" fill="#e9f4ee"/>
<path d="M198.64 357.50c-0.80 0 -0.96 -1.47 0.16 -1.93c0.64 -0.70 1.76 -0.70 2.24 -0.18c0.32 -1.75 3.04 -1.93 3.52 -0.07c0.96 -0.35 1.92 0.35 1.60 1.40c-0.16 0.49 -0.64 0.77 -1.12 0.77z" fill="#e9f4ee"/>
<path d="M231.64 357.00c-0.80 0 -0.96 -1.26 0.16 -1.65c0.64 -0.60 1.76 -0.60 2.24 -0.15c0.32 -1.50 3.04 -1.65 3.52 -0.06c0.96 -0.30 1.92 0.30 1.60 1.20c-0.16 0.42 -0.64 0.66 -1.12 0.66z" fill="#e9f4ee"/>
<path d="M181 424q3-3 6 0zM230 423q4-3 8 0zM184 430q3-2.500 6 0z" fill="#52c4c1"/>
</g>
<path d="M159.76 350.60c-2.82 0 -3.38 -4.37 0.56 -5.72c2.26 -2.08 6.20 -2.08 7.90 -0.52c1.13 -5.20 10.72 -5.72 12.41 -0.21c3.38 -1.04 6.77 1.04 5.64 4.16c-0.56 1.46 -2.26 2.29 -3.95 2.29z" fill="#fdfaf4"/>
<path d="M229.02 436.00c-1.90 0 -2.28 -3.99 0.38 -5.23c1.52 -1.90 4.18 -1.90 5.32 -0.48c0.76 -4.75 7.22 -5.23 8.36 -0.19c2.28 -0.95 4.56 0.95 3.80 3.80c-0.38 1.33 -1.52 2.09 -2.66 2.09z" fill="#fdfaf4"/>
<clipPath id="c2"><rect x="173.750" y="481" width="71.250" height="103.300"/></clipPath><clipPath id="c4"><rect x="173.750" y="800.500" width="71.250" height="102.800"/></clipPath>
<rect x="173.750" y="481" width="71.250" height="103.300" fill="#3f6a2c"/><g clip-path="url(#c2)">
<circle cx="190.7" cy="537.2" r="1.8" fill="#78a54c"/>
<circle cx="207.5" cy="541.0" r="2.3" fill="#4c7a2e"/>
<circle cx="192.2" cy="505.2" r="3.2" fill="#4c7a2e"/>
<circle cx="212.3" cy="537.8" r="1.9" fill="#6d9c44"/>
<circle cx="190.3" cy="496.7" r="3.0" fill="#264a20"/>
<circle cx="226.6" cy="550.4" r="1.1" fill="#78a54c"/>
<circle cx="176.8" cy="561.6" r="2.8" fill="#35602a"/>
<circle cx="207.4" cy="555.3" r="2.9" fill="#4c7a2e"/>
<circle cx="201.9" cy="563.7" r="2.0" fill="#6d9c44"/>
<circle cx="236.4" cy="491.1" r="1.3" fill="#2b4f22"/>
<circle cx="192.1" cy="550.4" r="2.7" fill="#557f33"/>
<circle cx="203.8" cy="567.1" r="2.3" fill="#78a54c"/>
<circle cx="215.4" cy="541.4" r="3.0" fill="#5f8f3a"/>
<circle cx="234.8" cy="583.4" r="2.5" fill="#2b4f22"/>
<circle cx="223.5" cy="514.7" r="2.2" fill="#78a54c"/>
<circle cx="214.3" cy="554.7" r="1.5" fill="#78a54c"/>
<circle cx="192.8" cy="493.9" r="2.1" fill="#183318"/>
<circle cx="244.3" cy="490.1" r="2.8" fill="#264a20"/>
<circle cx="237.7" cy="483.1" r="1.9" fill="#264a20"/>
<circle cx="235.9" cy="485.6" r="2.4" fill="#1f3d1c"/>
<circle cx="200.7" cy="541.6" r="2.2" fill="#557f33"/>
<circle cx="209.8" cy="584.1" r="1.7" fill="#1f3d1c"/>
<circle cx="181.5" cy="536.3" r="3.1" fill="#264a20"/>
<circle cx="194.5" cy="508.2" r="2.5" fill="#557f33"/>
<circle cx="196.1" cy="580.0" r="3.0" fill="#264a20"/>
<circle cx="200.6" cy="570.9" r="1.8" fill="#78a54c"/>
<circle cx="222.3" cy="491.6" r="3.1" fill="#47702f"/>
<circle cx="193.1" cy="546.5" r="2.6" fill="#557f33"/>
<circle cx="204.9" cy="507.7" r="1.7" fill="#557f33"/>
<circle cx="174.6" cy="523.9" r="2.3" fill="#1f3d1c"/>
<circle cx="200.6" cy="541.9" r="1.3" fill="#557f33"/>
<circle cx="207.0" cy="551.2" r="1.8" fill="#557f33"/>
<circle cx="226.3" cy="483.3" r="1.1" fill="#183318"/>
<circle cx="175.3" cy="519.1" r="2.4" fill="#35602a"/>
<circle cx="216.0" cy="514.1" r="1.8" fill="#557f33"/>
<circle cx="227.8" cy="568.2" r="1.6" fill="#4c7a2e"/>
<circle cx="181.2" cy="565.0" r="3.1" fill="#183318"/>
<circle cx="226.1" cy="513.0" r="1.5" fill="#557f33"/>
<circle cx="190.8" cy="500.4" r="2.0" fill="#183318"/>
<circle cx="180.7" cy="543.1" r="3.1" fill="#183318"/>
<circle cx="233.1" cy="526.3" r="2.9" fill="#6d9c44"/>
<circle cx="179.4" cy="557.7" r="1.5" fill="#47702f"/>
<circle cx="205.9" cy="504.2" r="1.3" fill="#47702f"/>
<circle cx="242.0" cy="513.6" r="2.8" fill="#47702f"/>
<circle cx="186.8" cy="509.8" r="2.8" fill="#5f8f3a"/>
<circle cx="231.2" cy="516.7" r="1.3" fill="#557f33"/>
<circle cx="210.7" cy="568.8" r="2.0" fill="#4c7a2e"/>
<circle cx="194.4" cy="539.7" r="1.1" fill="#4c7a2e"/>
<circle cx="184.9" cy="481.5" r="3.1" fill="#47702f"/>
<circle cx="244.1" cy="525.9" r="3.1" fill="#183318"/>
<circle cx="189.6" cy="558.0" r="2.8" fill="#78a54c"/>
<circle cx="242.4" cy="537.2" r="3.0" fill="#1f3d1c"/>
<circle cx="234.9" cy="581.3" r="1.3" fill="#2b4f22"/>
<circle cx="177.0" cy="574.3" r="2.5" fill="#2b4f22"/>
<circle cx="237.6" cy="573.9" r="2.3" fill="#1f3d1c"/>
<circle cx="208.0" cy="493.5" r="2.1" fill="#2b4f22"/>
<circle cx="221.0" cy="535.2" r="1.9" fill="#78a54c"/>
<circle cx="181.8" cy="494.0" r="3.1" fill="#47702f"/>
<circle cx="207.8" cy="561.8" r="1.8" fill="#6d9c44"/>
<circle cx="182.5" cy="572.7" r="1.3" fill="#2b4f22"/>
<circle cx="230.2" cy="576.2" r="2.8" fill="#1f3d1c"/>
<circle cx="208.5" cy="540.0" r="1.9" fill="#557f33"/>
<circle cx="191.4" cy="544.8" r="2.1" fill="#5f8f3a"/>
<circle cx="207.4" cy="561.2" r="1.0" fill="#5f8f3a"/>
<circle cx="229.0" cy="485.8" r="1.1" fill="#264a20"/>
<circle cx="243.2" cy="569.3" r="1.2" fill="#47702f"/>
<circle cx="208.7" cy="497.2" r="1.2" fill="#264a20"/>
<circle cx="219.8" cy="541.6" r="1.8" fill="#6d9c44"/>
<circle cx="244.1" cy="525.3" r="1.3" fill="#1f3d1c"/>
<circle cx="224.8" cy="520.3" r="1.2" fill="#6d9c44"/>
<circle cx="176.8" cy="528.6" r="2.4" fill="#47702f"/>
<circle cx="200.8" cy="563.8" r="2.4" fill="#4c7a2e"/>
<circle cx="177.5" cy="545.8" r="2.7" fill="#35602a"/>
<circle cx="203.7" cy="552.7" r="2.0" fill="#6d9c44"/>
<circle cx="189.3" cy="508.9" r="2.3" fill="#4c7a2e"/>
<circle cx="189.7" cy="494.5" r="1.1" fill="#35602a"/>
<circle cx="200.4" cy="573.7" r="2.7" fill="#557f33"/>
<circle cx="182.4" cy="552.3" r="3.1" fill="#183318"/>
<circle cx="220.9" cy="572.7" r="2.7" fill="#5f8f3a"/>
<circle cx="226.0" cy="539.2" r="1.2" fill="#78a54c"/>
<circle cx="224.8" cy="529.9" r="1.5" fill="#4c7a2e"/>
<circle cx="176.9" cy="490.5" r="1.2" fill="#264a20"/>
<circle cx="186.5" cy="483.4" r="2.9" fill="#1f3d1c"/>
<circle cx="175.6" cy="492.9" r="2.1" fill="#183318"/>
<circle cx="241.6" cy="540.8" r="2.8" fill="#1f3d1c"/>
<circle cx="244.7" cy="539.2" r="2.2" fill="#2b4f22"/>
<circle cx="181.4" cy="558.4" r="3.1" fill="#1f3d1c"/>
<circle cx="212.9" cy="570.8" r="1.4" fill="#5f8f3a"/>
<circle cx="191.0" cy="499.6" r="1.5" fill="#47702f"/>
<circle cx="223.6" cy="578.4" r="1.6" fill="#47702f"/>
<circle cx="202.0" cy="517.2" r="1.9" fill="#5f8f3a"/>
<circle cx="200.5" cy="505.3" r="3.0" fill="#6d9c44"/>
<circle cx="203.3" cy="539.7" r="2.3" fill="#78a54c"/>
<circle cx="222.6" cy="497.1" r="1.9" fill="#2b4f22"/>
<circle cx="185.3" cy="532.4" r="2.1" fill="#78a54c"/>
<circle cx="241.5" cy="541.6" r="2.9" fill="#2b4f22"/>
<circle cx="192.8" cy="501.6" r="2.3" fill="#35602a"/>
<circle cx="240.4" cy="569.0" r="2.2" fill="#35602a"/>
<circle cx="221.6" cy="569.4" r="2.3" fill="#78a54c"/>
<circle cx="215.4" cy="508.6" r="1.5" fill="#5f8f3a"/>
<circle cx="192.9" cy="564.1" r="1.4" fill="#78a54c"/>
<circle cx="199.4" cy="514.3" r="2.7" fill="#6d9c44"/>
<circle cx="203.6" cy="553.1" r="2.5" fill="#6d9c44"/>
<circle cx="207.1" cy="567.2" r="2.8" fill="#78a54c"/>
<circle cx="175.7" cy="583.6" r="1.2" fill="#264a20"/>
<circle cx="229.5" cy="572.1" r="1.1" fill="#6d9c44"/>
<circle cx="237.2" cy="548.0" r="2.7" fill="#1f3d1c"/>
<circle cx="242.1" cy="569.2" r="1.5" fill="#2b4f22"/>
<circle cx="229.0" cy="495.2" r="2.4" fill="#183318"/>
<circle cx="234.9" cy="573.9" r="1.6" fill="#5f8f3a"/>
<circle cx="196.1" cy="524.7" r="2.6" fill="#5f8f3a"/>
<circle cx="182.2" cy="508.3" r="3.0" fill="#1f3d1c"/>
<circle cx="199.2" cy="540.9" r="2.5" fill="#5f8f3a"/>
<circle cx="175.8" cy="515.2" r="1.8" fill="#1f3d1c"/>
<circle cx="188.7" cy="541.4" r="3.1" fill="#4c7a2e"/>
<circle cx="182.7" cy="513.9" r="2.9" fill="#1f3d1c"/>
<circle cx="221.2" cy="492.6" r="3.0" fill="#35602a"/>
<circle cx="180.7" cy="578.2" r="1.8" fill="#35602a"/>
<circle cx="227.7" cy="511.5" r="2.5" fill="#557f33"/>
<circle cx="181.4" cy="578.6" r="1.7" fill="#47702f"/>
<circle cx="212.0" cy="492.7" r="2.1" fill="#35602a"/>
<circle cx="178.0" cy="511.4" r="2.6" fill="#183318"/>
<circle cx="186.7" cy="547.7" r="2.4" fill="#6d9c44"/>
<circle cx="200.2" cy="576.0" r="2.0" fill="#1f3d1c"/>
<circle cx="240.1" cy="495.6" r="1.7" fill="#183318"/>
<circle cx="220.0" cy="524.4" r="1.7" fill="#6d9c44"/>
<circle cx="206.4" cy="513.3" r="1.4" fill="#5f8f3a"/>
<circle cx="181.4" cy="499.7" r="2.2" fill="#47702f"/>
<circle cx="226.4" cy="518.1" r="1.6" fill="#4c7a2e"/>
<circle cx="177.6" cy="495.1" r="2.1" fill="#35602a"/>
<circle cx="191.4" cy="560.4" r="1.8" fill="#557f33"/>
<circle cx="241.1" cy="527.3" r="2.8" fill="#1f3d1c"/>
<circle cx="198.9" cy="568.5" r="1.2" fill="#557f33"/>
<circle cx="215.8" cy="551.4" r="2.2" fill="#5f8f3a"/>
<circle cx="186.9" cy="500.5" r="1.9" fill="#183318"/>
<circle cx="201.6" cy="582.6" r="1.3" fill="#47702f"/>
<circle cx="184.2" cy="522.2" r="1.4" fill="#47702f"/>
<circle cx="185.9" cy="499.5" r="2.9" fill="#35602a"/>
<circle cx="229.4" cy="484.1" r="2.8" fill="#264a20"/>
<circle cx="241.4" cy="520.6" r="2.2" fill="#47702f"/>
<circle cx="195.8" cy="532.4" r="2.2" fill="#557f33"/>
<circle cx="237.6" cy="550.0" r="1.1" fill="#2b4f22"/>
<circle cx="225.5" cy="481.2" r="2.7" fill="#183318"/>
<circle cx="190.4" cy="498.9" r="2.4" fill="#2b4f22"/>
<circle cx="187.5" cy="535.7" r="1.1" fill="#78a54c"/>
<circle cx="239.7" cy="578.8" r="1.2" fill="#35602a"/>
<circle cx="242.1" cy="573.1" r="1.3" fill="#1f3d1c"/>
<circle cx="218.2" cy="486.2" r="1.8" fill="#2b4f22"/>
<circle cx="209.8" cy="532.5" r="1.0" fill="#557f33"/>
<circle cx="196.8" cy="570.9" r="2.5" fill="#6d9c44"/>
<g fill="#6f9f45" opacity=".85"><rect x="206" y="519" width="11" height="20"/><rect x="203" y="543" width="8" height="21"/><rect x="212" y="543" width="8" height="21"/><rect x="222" y="545" width="8" height="18"/><rect x="188" y="540" width="12" height="22"/></g>
<g stroke="#2c4a20" stroke-width=".800" fill="none"><path d="M202 481v103M178 541h60M220 541v30M178 521h24M178 568h50"/></g></g>
<rect x="55" y="584.300" width="190" height="10.600" fill="#14312f"/>
<path d="M162.65 526.50c-2.56 0 -3.07 -5.67 0.51 -7.43c2.05 -2.70 5.63 -2.70 7.17 -0.68c1.02 -6.75 9.73 -7.43 11.26 -0.27c3.07 -1.35 6.14 1.35 5.12 5.40c-0.51 1.89 -2.05 2.97 -3.58 2.97z" fill="#fdfaf4"/>
<path d="M228.60 549.30c-2.00 0 -2.40 -4.33 0.40 -5.67c1.60 -2.06 4.40 -2.06 5.60 -0.52c0.80 -5.15 7.60 -5.67 8.80 -0.21c2.40 -1.03 4.80 1.03 4.00 4.12c-0.40 1.44 -1.60 2.27 -2.80 2.27z" fill="#fdfaf4"/>
<rect x="64.1" y="663.900" width="37.100" height="73.900" rx="4.600" fill="#fdfaf4"/>
<rect x="108.75" y="663.900" width="37.100" height="73.900" rx="4.600" fill="#fdfaf4"/>
<rect x="153.4" y="663.900" width="37.100" height="73.900" rx="4.600" fill="#fdfaf4"/>
<rect x="197.9" y="663.900" width="37.100" height="73.900" rx="4.600" fill="#fdfaf4"/>
<path d="M102.5 697.800l5.400 3l-5.400 3z" fill="#10292a"/>
<path d="M147.1 697.800l5.400 3l-5.400 3z" fill="#10292a"/>
<path d="M191.7 697.800l5.400 3l-5.400 3z" fill="#10292a"/>
<rect x="55" y="743.900" width="190" height="10.700" fill="#14312f"/>
<rect x="173.750" y="800.500" width="71.250" height="102.800" fill="#1d3a25"/><g clip-path="url(#c4)">
<circle cx="179.5" cy="886.8" r="3.8" fill="#2c5233" opacity=".8"/>
<circle cx="224.8" cy="876.5" r="2.5" fill="#264a2c" opacity=".8"/>
<circle cx="240.1" cy="889.1" r="2.8" fill="#264a2c" opacity=".8"/>
<circle cx="208.3" cy="811.7" r="1.6" fill="#2c5233" opacity=".8"/>
<circle cx="234.0" cy="873.1" r="2.7" fill="#35603c" opacity=".8"/>
<circle cx="223.6" cy="855.7" r="2.8" fill="#3c6a44" opacity=".8"/>
<circle cx="208.6" cy="802.9" r="2.9" fill="#3c6a44" opacity=".8"/>
<circle cx="202.4" cy="819.1" r="4.2" fill="#3c6a44" opacity=".8"/>
<circle cx="192.0" cy="887.8" r="2.8" fill="#183020" opacity=".8"/>
<circle cx="216.2" cy="823.5" r="1.5" fill="#264a2c" opacity=".8"/>
<circle cx="192.2" cy="838.5" r="4.1" fill="#14281a" opacity=".8"/>
<circle cx="187.7" cy="822.0" r="2.0" fill="#35603c" opacity=".8"/>
<circle cx="209.6" cy="866.0" r="1.9" fill="#14281a" opacity=".8"/>
<circle cx="185.7" cy="850.9" r="1.7" fill="#2c5233" opacity=".8"/>
<circle cx="202.5" cy="833.2" r="1.6" fill="#3c6a44" opacity=".8"/>
<circle cx="177.4" cy="842.0" r="2.7" fill="#2c5233" opacity=".8"/>
<circle cx="238.5" cy="891.3" r="2.2" fill="#35603c" opacity=".8"/>
<circle cx="207.6" cy="817.4" r="3.4" fill="#183020" opacity=".8"/>
<circle cx="238.8" cy="861.6" r="3.9" fill="#183020" opacity=".8"/>
<circle cx="193.4" cy="881.5" r="2.9" fill="#183020" opacity=".8"/>
<circle cx="208.6" cy="858.2" r="1.6" fill="#183020" opacity=".8"/>
<circle cx="218.6" cy="835.9" r="1.8" fill="#3c6a44" opacity=".8"/>
<circle cx="204.8" cy="809.7" r="3.4" fill="#2c5233" opacity=".8"/>
<circle cx="175.9" cy="809.8" r="2.0" fill="#2c5233" opacity=".8"/>
<circle cx="208.1" cy="819.9" r="3.0" fill="#183020" opacity=".8"/>
<circle cx="188.0" cy="900.6" r="2.9" fill="#35603c" opacity=".8"/>
<circle cx="239.1" cy="897.1" r="1.6" fill="#183020" opacity=".8"/>
<circle cx="227.3" cy="865.4" r="2.7" fill="#183020" opacity=".8"/>
<circle cx="186.9" cy="843.0" r="3.0" fill="#14281a" opacity=".8"/>
<circle cx="197.6" cy="870.4" r="4.3" fill="#264a2c" opacity=".8"/>
<circle cx="233.4" cy="889.4" r="2.7" fill="#14281a" opacity=".8"/>
<circle cx="199.3" cy="819.4" r="3.9" fill="#35603c" opacity=".8"/>
<circle cx="190.1" cy="880.6" r="2.9" fill="#183020" opacity=".8"/>
<circle cx="232.2" cy="852.6" r="3.8" fill="#3c6a44" opacity=".8"/>
<circle cx="223.4" cy="898.1" r="1.6" fill="#264a2c" opacity=".8"/>
<circle cx="224.4" cy="802.9" r="2.9" fill="#3c6a44" opacity=".8"/>
<circle cx="222.0" cy="810.5" r="2.2" fill="#3c6a44" opacity=".8"/>
<circle cx="177.8" cy="863.4" r="1.6" fill="#35603c" opacity=".8"/>
<circle cx="237.7" cy="875.8" r="2.5" fill="#183020" opacity=".8"/>
<circle cx="173.9" cy="820.5" r="3.9" fill="#2c5233" opacity=".8"/>
<circle cx="197.9" cy="832.5" r="2.9" fill="#3c6a44" opacity=".8"/>
<circle cx="188.7" cy="871.2" r="4.4" fill="#3c6a44" opacity=".8"/>
<circle cx="183.9" cy="901.8" r="1.8" fill="#183020" opacity=".8"/>
<circle cx="242.7" cy="823.1" r="3.2" fill="#35603c" opacity=".8"/>
<circle cx="209.7" cy="893.8" r="2.5" fill="#14281a" opacity=".8"/>
<circle cx="229.5" cy="848.6" r="3.4" fill="#2c5233" opacity=".8"/>
<circle cx="232.6" cy="812.1" r="1.6" fill="#2c5233" opacity=".8"/>
<circle cx="187.9" cy="892.3" r="1.8" fill="#35603c" opacity=".8"/>
<circle cx="202.2" cy="885.4" r="3.5" fill="#2c5233" opacity=".8"/>
<circle cx="219.5" cy="878.8" r="4.1" fill="#183020" opacity=".8"/>
<circle cx="202.5" cy="868.5" r="3.8" fill="#183020" opacity=".8"/>
<circle cx="233.3" cy="861.6" r="3.9" fill="#264a2c" opacity=".8"/>
<circle cx="182.1" cy="801.3" r="2.4" fill="#3c6a44" opacity=".8"/>
<circle cx="179.3" cy="836.1" r="3.0" fill="#2c5233" opacity=".8"/>
<circle cx="239.6" cy="871.1" r="2.6" fill="#3c6a44" opacity=".8"/>
<circle cx="178.5" cy="853.8" r="2.2" fill="#2c5233" opacity=".8"/>
<circle cx="197.6" cy="844.8" r="1.8" fill="#264a2c" opacity=".8"/>
<circle cx="196.8" cy="877.6" r="2.1" fill="#264a2c" opacity=".8"/>
<circle cx="236.1" cy="901.9" r="3.3" fill="#3c6a44" opacity=".8"/>
<circle cx="211.9" cy="843.5" r="4.3" fill="#14281a" opacity=".8"/>
<path d="M208 845v24" stroke="#5c7a3a" stroke-width="1.200"/>
<ellipse cx="208.800" cy="868" rx="18.400" ry="24" fill="#3a5a3c" opacity=".55"/>
<path d="M190.800 861c10-3 26-3 36 0c2 18-4 30-18 31c-14-1-20-13-18-31z" fill="#33401f"/>
<path d="M191.500 864c10 6 24 8 34 2c0 4-1 8-2 10c-10 4-22 2-30-4z" fill="#4f7a34" opacity=".8"/>
<path d="M191 861c10-3.500 26-3.500 36 0" stroke="#c8d8cc" stroke-width="1" fill="none"/>
<g fill="#8fbfa0"><path d="M179 809c8-3 18 0 24 8c-8 4-18 2-24-8z"/><path d="M185 820c6-2 16 2 22 10c-8 2-18-2-22-10z"/><path d="M236.500 815c-8-3-20 0-26 10c10 3 20-2 26-10z"/><path d="M222 808c-5 0-11 4-13 10c6 0 11-4 13-10z"/></g>
<path d="M200 803c4 2 8 8 8 14c-5-2-8-8-8-14z" fill="#5a9a5c"/>
<path d="M207.500 822v32" stroke="#5c7a3a" stroke-width="1.200"/></g>
<rect x="55" y="903.300" width="190" height="10.700" fill="#14312f"/>
<path d="M164.99 890.80c-2.61 0 -3.13 -5.63 0.52 -7.37c2.09 -2.68 5.74 -2.68 7.31 -0.67c1.04 -6.70 9.92 -7.37 11.48 -0.27c3.13 -1.34 6.26 1.34 5.22 5.36c-0.52 1.88 -2.09 2.95 -3.65 2.95z" fill="#fdfaf4"/>
<path d="M181.41 992.00c-4.26 0 -5.11 -9.66 0.85 -12.65c3.41 -4.60 9.37 -4.60 11.93 -1.15c1.70 -11.50 16.19 -12.65 18.74 -0.46c5.11 -2.30 10.22 2.30 8.52 9.20c-0.85 3.22 -3.41 5.06 -5.96 5.06z" fill="#fdfaf4"/>
</svg></div>
<span class="t" style="left:67.73px;top:356px;font-size:15.4px;color:#10292a;font-weight:700;transform:scaleX(0.8033);">Ecosystem</span>
<span class="t" style="left:67.68px;top:372px;font-size:15.4px;color:#10292a;font-weight:700;transform:scaleX(0.8496);">Presentation</span>
<span class="t" style="left:70.34px;top:396px;font-size:4.2px;color:#f4fbf8;font-weight:700;transform:scaleX(0.8470);">A project by Full Name</span>
<span class="t" style="left:64.00px;top:491px;font-size:8.2px;color:#10292a;font-weight:700;transform:scaleX(0.8653);">Table of Contents</span>
<span class="t" style="left:64.22px;top:509px;font-size:4.4px;color:#163434;">1.</span>
<span class="t" style="left:70.94px;top:509px;font-size:4.4px;color:#163434;transform:scaleX(0.8552);">Topic Overview</span>
<span class="t" style="left:64.29px;top:516px;font-size:4.4px;color:#163434;">2.</span>
<span class="t" style="left:70.70px;top:516px;font-size:4.4px;color:#163434;transform:scaleX(0.8702);">Detailed Description</span>
<span class="t" style="left:64.36px;top:522px;font-size:4.4px;color:#163434;">3.</span>
<span class="t" style="left:70.70px;top:522px;font-size:4.4px;color:#163434;transform:scaleX(0.8591);">Illustrative Examples</span>
<span class="t" style="left:64.43px;top:529px;font-size:4.4px;color:#163434;">4.</span>
<span class="t" style="left:70.82px;top:529px;font-size:4.4px;color:#163434;transform:scaleX(0.8835);">Quote</span>
<span class="t" style="left:64.36px;top:535px;font-size:4.4px;color:#163434;">5.</span>
<span class="t" style="left:71.00px;top:535px;font-size:4.4px;color:#163434;transform:scaleX(0.8368);">Assignment</span>
<span class="t" style="left:64.29px;top:542px;font-size:4.4px;color:#163434;">6.</span>
<span class="t" style="left:70.82px;top:542px;font-size:4.4px;color:#163434;transform:scaleX(0.8784);">Q&amp;A</span>
<span class="t" style="left:64.29px;top:548px;font-size:4.4px;color:#163434;">7.</span>
<span class="t" style="left:70.82px;top:548px;font-size:4.4px;color:#163434;transform:scaleX(0.8723);">Contact Information</span>
<span class="t" style="left:64.00px;top:650px;font-size:8.2px;color:#10292a;font-weight:700;transform:scaleX(0.8173);">Timeline</span>
<span class="t" style="left:63.77px;top:810px;font-size:8.2px;color:#10292a;font-weight:700;transform:scaleX(0.8887);">Chapter Title</span>
<span class="t" style="left:63.87px;top:828px;font-size:4.4px;color:#163434;transform:scaleX(0.9100);">•First point of information</span>
<span class="t" style="left:63.88px;top:835px;font-size:4.4px;color:#163434;transform:scaleX(0.8881);">•Second point of information</span>
<span class="t" style="left:63.87px;top:842px;font-size:4.4px;color:#163434;transform:scaleX(0.9132);">•Third point of information</span>
<span class="t" style="left:63.87px;top:849px;font-size:4.4px;color:#163434;transform:scaleX(0.9140);">•Fourth point of information</span>
<span class="t" style="left:63.87px;top:856px;font-size:4.4px;color:#163434;transform:scaleX(0.9202);">•Fifth point of information</span>
<span class="t" style="left:63.58px;top:970px;font-size:8.2px;color:#10292a;font-weight:700;transform:scaleX(0.8109);">Bibliograph</span>
<span class="t" style="left:63.70px;top:988px;font-size:4.4px;color:#10292a;transform:scaleX(0.8652);">Here you could list down the sources of work you have</span>
<span class="t" style="left:63.76px;top:994px;font-size:4.4px;color:#10292a;transform:scaleX(0.8718);">used to create this presentation.</span>
<div class="b" style="left:0px;top:998px;width:294px;height:2.7px;background:#f0f0f0;z-index:11;"></div>
<div class="b" style="left:6.2px;top:1000.7px;width:299.6px;height:36.2px;background:#fff;"></div>
<div class="b" style="left:1910.4px;top:171.6px;width:7.2px;height:842.2px;background:#b7b7b7;border-radius:3.600px;"></div>
<span class="t" style="left:1544.18px;top:209px;font-size:18.8px;color:#222;transform:scaleX(0.9268);">Character</span>
<div class="b" style="left:1525.4px;top:248px;width:226.2px;height:29px;background:#fff;border:1.200px solid #b3b3b3;border-radius:5px;box-sizing:border-box;"></div>
<div class="b" style="left:1715px;top:249.2px;width:35.4px;height:26.6px;background:#f7f7f7;border-radius:0 4px 4px 0;"></div>
<span class="t" style="left:1532.04px;top:257px;font-size:16.8px;color:#1c1c1c;transform:scaleX(0.9601);">Carlito</span>
<div class="b" style="left:1757.2px;top:248px;width:103.4px;height:29px;background:#fff;border:1.200px solid #b3b3b3;border-radius:5px;box-sizing:border-box;"></div>
<div class="b" style="left:1824px;top:249.2px;width:35.4px;height:26.6px;background:#f7f7f7;border-radius:0 4px 4px 0;"></div>
<span class="t" style="left:1763.97px;top:257px;font-size:16.8px;color:#1c1c1c;transform:scaleX(0.9850);">118 pt</span>
<div class="b" style="left:1525.4px;top:283px;width:35.8px;height:35.8px;background:#efe3dd;border:1.6px solid #c5520f;border-radius:6px;box-sizing:border-box;"></div>
<span class="t" style="left:1534.31px;top:290px;font-size:23.2px;color:#222;font-weight:700;transform:scaleX(0.8897);">B</span>
<span class="t" style="left:1579.12px;top:290px;font-size:23.2px;color:#222;font-style:italic;font-family:'Liberation Serif',serif;transform:scaleX(0.8938);">I</span>
<span class="t" style="left:1614.15px;top:291px;font-size:22.6px;color:#222;transform:scaleX(1.0284);">U</span>
<span class="t" style="left:1675.97px;top:291px;font-size:22.6px;color:#222;transform:scaleX(0.7452);">S</span>
<span class="t" style="left:1714.20px;top:289px;font-size:27.6px;color:#1b86d9;transform:scaleX(0.9275);-webkit-text-stroke:.7px #1b86d9;">A</span>
<span class="t" style="left:1712.80px;top:288px;font-size:27.6px;color:#2a2a2a;transform:scaleX(0.9275);-webkit-text-stroke:.7px #2a2a2a;">A</span>
<span class="t" style="left:1805.60px;top:290px;font-size:23.6px;color:#222;transform:scaleX(0.8703);">A</span>
<span class="t" style="left:1844.40px;top:296px;font-size:18.8px;color:#222;transform:scaleX(0.8867);">A</span>
<span class="t" style="left:1537.30px;top:335px;font-size:20.2px;color:#222;transform:scaleX(0.8915);">A</span>
<div class="b" style="left:1587.2px;top:336px;width:16px;height:11.9px;background:#f7931e;border-radius:1.500px;z-index:6;"></div>
<span class="t" style="left:1588.02px;top:338px;font-size:11.4px;color:#fff;transform:scaleX(1.0622);">ab</span>
<span class="t" style="left:1642.20px;top:335px;font-size:20.2px;color:#222;transform:scaleX(0.9082);">AV</span>
<span class="t" style="left:1766.35px;top:340px;font-size:18px;color:#222;transform:scaleX(0.8932);">X</span>
<span class="t" style="left:1778.13px;top:338px;font-size:12px;color:#1b86d9;font-weight:700;transform:scaleX(0.9833);">2</span>
<span class="t" style="left:1805.75px;top:340px;font-size:18px;color:#222;transform:scaleX(0.8932);">X</span>
<span class="t" style="left:1817.52px;top:349px;font-size:12px;color:#1b86d9;font-weight:700;transform:scaleX(1.0167);">2</span>
<span class="t" style="left:1544.28px;top:417px;font-size:18.8px;color:#222;transform:scaleX(0.8989);">Lists</span>
<span class="t" style="left:1589.59px;top:462px;font-size:9.8px;color:#1b86d9;">1</span>
<span class="t" style="left:1589.74px;top:472px;font-size:9.8px;color:#1b86d9;">2</span>
<span class="t" style="left:1589.89px;top:482px;font-size:9.8px;color:#1b86d9;">3</span>
<span class="t" style="left:1544.23px;top:537px;font-size:18.8px;color:#222;transform:scaleX(0.9312);">Paragraph</span>
<div class="b" style="left:1525.4px;top:577.5px;width:35.8px;height:35.4px;background:#efe3dd;border:1.6px solid #c5520f;border-radius:6px;box-sizing:border-box;"></div>
<div class="b" style="left:1796.9px;top:577.5px;width:35.8px;height:35.4px;background:#efe3dd;border:1.6px solid #c5520f;border-radius:6px;box-sizing:border-box;"></div>
<span class="t" style="left:1809.93px;top:580.32px;font-size:27.9px;color:#3b3b3b;transform-origin:0 0;transform:scale(1.2311,0.9983);">¶</span>
<span class="t" style="left:1844.53px;top:580.32px;font-size:27.9px;color:#3b3b3b;transform-origin:0 0;transform:scale(1.2311,0.9983);">¶</span>
<div class="b" style="left:1525.4px;top:623.1px;width:35.8px;height:35.4px;background:#efe3dd;border:1.6px solid #c5520f;border-radius:6px;box-sizing:border-box;"></div>
<span class="t" style="left:1525.36px;top:677px;font-size:19px;color:#222;transform:scaleX(0.9158);">Spacing:</span>
<span class="t" style="left:1702.32px;top:677px;font-size:19px;color:#222;transform:scaleX(0.9963);">Indent:</span>
<div class="b" style="left:1565px;top:745.4px;width:104px;height:32.8px;background:#f8f8f8;border:1.500px solid #484848;border-radius:5px;box-sizing:border-box;"></div>
<span class="t" style="left:1570.52px;top:756px;font-size:16.8px;color:#1c1c1c;transform:scaleX(0.9070);">0.34</span>
<span class="t" style="left:1610.65px;top:755.42px;font-size:17.8px;color:#222;transform-origin:0 0;transform:scale(0.9888,0.9988);">″</span>
<div class="b" style="left:1565px;top:783.8px;width:104px;height:32.8px;background:#f8f8f8;border:1.500px solid #484848;border-radius:5px;box-sizing:border-box;"></div>
<span class="t" style="left:1570.49px;top:795px;font-size:16.8px;color:#1c1c1c;transform:scaleX(0.9762);">0</span>
<span class="t" style="left:1610.65px;top:793.62px;font-size:17.8px;color:#222;transform-origin:0 0;transform:scale(0.9888,0.9988);">″</span>
<div class="b" style="left:1743.8px;top:746.3px;width:104.1px;height:33.2px;background:#f8f8f8;border:1.500px solid #484848;border-radius:5px;box-sizing:border-box;"></div>
<span class="t" style="left:1748.53px;top:757px;font-size:16.8px;color:#1c1c1c;transform:scaleX(0.8891);">0.01</span>
<span class="t" style="left:1788.65px;top:755.62px;font-size:17.8px;color:#222;transform-origin:0 0;transform:scale(0.9888,0.9988);">″</span>
<div class="b" style="left:1743.8px;top:785px;width:104.1px;height:33.2px;background:#f8f8f8;border:1.500px solid #484848;border-radius:5px;box-sizing:border-box;"></div>
<span class="t" style="left:1748.53px;top:796px;font-size:16.8px;color:#1c1c1c;transform:scaleX(0.8891);">0.03</span>
<span class="t" style="left:1788.65px;top:794.62px;font-size:17.8px;color:#222;transform-origin:0 0;transform:scale(0.9888,0.9988);">″</span>
<div class="b" style="left:1743.8px;top:824.4px;width:104.1px;height:33.2px;background:#f8f8f8;border:1.500px solid #484848;border-radius:5px;box-sizing:border-box;"></div>
<span class="t" style="left:1748.49px;top:834px;font-size:16.8px;color:#1c1c1c;transform:scaleX(0.9762);">0</span>
<span class="t" style="left:1788.65px;top:833.22px;font-size:17.8px;color:#222;transform-origin:0 0;transform:scale(0.9888,0.9988);">″</span>
<svg class="ov" width="1920" height="1080" viewBox="0 0 1920 1080">
<g fill="none" stroke="#0082c9" stroke-width="5.2"><circle cx="26.4" cy="28.8" r="7.4"/><circle cx="51.8" cy="28.8" r="13"/><circle cx="77" cy="28.8" r="7.2"/></g>
<g><path d="M116.3 21.5h13.2l2.2 2.2v12.6h-15.4z" fill="#6a6a6a" stroke="#3a3a3a" stroke-width="1.4" stroke-linejoin="round"/><rect x="119" y="22" width="9.6" height="5.6" fill="#3a3a3a"/><rect x="119.6" y="31" width="8.6" height="5.3" fill="#f0f0f0"/><rect x="122.5" y="32.5" width="2.3" height="3.8" fill="#3a3a3a"/></g>
<g fill="none" stroke="#222" stroke-width="1.6" stroke-linecap="round" stroke-linejoin="round"><path d="M157 22.6h-5.2a1 1 0 0 0-1 1v11a1 1 0 0 0 1 1h11a1 1 0 0 0 1-1v-5.4"/><path d="M155.5 30.7l8.3-8.3M159 22.3h5v5"/></g>
<clipPath id="av1"><circle cx="1667.900" cy="28.600" r="12.600"/></clipPath><clipPath id="av2"><circle cx="1691" cy="28.600" r="12.600"/></clipPath>
<circle cx="1691" cy="28.600" r="14.5" fill="#fbfbfb"/>
<g clip-path="url(#av2)"><rect x="1677" y="14" width="28" height="29" fill="#7b8638"/><ellipse cx="1683" cy="26" rx="5" ry="8" fill="#a3a047"/><ellipse cx="1697" cy="20" rx="7" ry="5" fill="#4a5a26"/><ellipse cx="1699" cy="30" rx="5" ry="6" fill="#5d6c2c"/><circle cx="1696.5" cy="19.500" r="1.300" fill="#e8e6d8"/><path d="M1678 38h26v6h-26z" fill="#e6d6cf"/><path d="M1700 34.500h4v3h-4zM1679 33.500h4v2.500h-4z" fill="#2a1c1c"/><path d="M1686 43c0-8 1.500-12.500 5.500-13.500c4 1 6.500 5.500 6.500 13.500z" fill="#b4d4e4"/><ellipse cx="1690.7" cy="25.300" rx="2.600" ry="3.700" fill="#dba684"/><path d="M1687.9 24.600c-.500-3.600 1.400-5 3-5c1.800 0 3.200 1.600 2.600 5c-1-2.200-4-2.600-5.600 0z" fill="#4a3220"/></g>
<circle cx="1691" cy="28.600" r="12.7" fill="none" stroke="#8c8a06" stroke-width="2.2"/>
<circle cx="1667.9" cy="28.600" r="14.600000000000001" fill="#fbfbfb"/>
<g clip-path="url(#av1)"><rect x="1653.9" y="14" width="28" height="29" fill="#7b8638"/><ellipse cx="1659.9" cy="26" rx="5" ry="8" fill="#a3a047"/><ellipse cx="1673.9" cy="20" rx="7" ry="5" fill="#4a5a26"/><ellipse cx="1675.9" cy="30" rx="5" ry="6" fill="#5d6c2c"/><circle cx="1673.4" cy="19.500" r="1.300" fill="#e8e6d8"/><path d="M1654.9 38h26v6h-26z" fill="#e6d6cf"/><path d="M1676.9 34.500h4v3h-4zM1655.9 33.500h4v2.500h-4z" fill="#2a1c1c"/><path d="M1662.9 43c0-8 1.500-12.500 5.500-13.500c4 1 6.500 5.500 6.500 13.500z" fill="#b4d4e4"/><ellipse cx="1667.6000000000001" cy="25.300" rx="2.600" ry="3.700" fill="#dba684"/><path d="M1664.8000000000002 24.600c-.500-3.600 1.400-5 3-5c1.800 0 3.200 1.600 2.600 5c-1-2.200-4-2.600-5.600 0z" fill="#4a3220"/></g>
<circle cx="1667.9" cy="28.600" r="12.8" fill="none" stroke="#14141f" stroke-width="2.5"/>
<g><rect x="1720" y="19.2" width="23" height="19.6" rx="1.5" fill="#fff" stroke="#3a3a3a" stroke-width="1.5"/><rect x="1737" y="19.2" width="6" height="19.6" rx="1" fill="#83beec" stroke="#1b86d9" stroke-width="1.5"/><path d="M1734 31.6h-8.2m3.6-3.6l-3.6 3.6l3.6 3.6" fill="none" stroke="#1b86d9" stroke-width="1.3"/></g>
<g><path d="M1768.6 20.5l2.6 5.6 6.1.7-4.5 4.2 1.2 6-5.4-3-5.4 3 1.2-6-4.5-4.2 6.1-.7z" fill="#fbe08a" stroke="#ee8a22" stroke-width="1.3" stroke-linejoin="round"/><path d="M1773 21.2h9.5M1776.8 24.5h8.2M1778.2 27.8h7.4M1777.6 31.1h7.6" stroke="#f5b36c" stroke-width="1.5" fill="none"/></g>
<path d="M1880 21.4l15.2 15.2M1895.2 21.4l-15.2 15.2" stroke="#111" stroke-width="2" fill="none"/>
<path d="M239.20 1059.70h9l-4.50 5.6z" fill="#444"/>
<g fill="none" stroke-width="1.4"><path d="M1649.6 1055.6v6.600h4.600M1660.600 1062.200h4.600v-6.600" stroke="#333"/><path d="M1657.300 1063.600v-9.600m-3.400 3.400l3.400-3.400l3.400 3.400" stroke="#1b86d9"/><path d="M1649.600 1069v-1.400q0-.8 .800-.8h14q.8 0 .8 .8v1.400" stroke="#b0b0b0"/></g>
<g fill="none" stroke-width="1.4"><path d="M1690 1054.600v1.400q0 .8 .800 .8h14.400q.8 0 .8-.8v-1.400" stroke="#b0b0b0"/><path d="M1690 1069v-6.600h4.600M1701.400 1062.400h4.600v6.600" stroke="#333"/><path d="M1697.800 1061.600v8.800m-3.400-3.400l3.400 3.400l3.400-3.400" stroke="#1b86d9"/></g>
<g fill="none"><circle cx="1746.6" cy="1061.2" r="7" stroke="#333" stroke-width="1.4"/><path d="M1751.6 1066.2l4.2 4.2" stroke="#222" stroke-width="2"/></g>
<path d="M1781.6 1062.5h12.6" stroke="#333" stroke-width="1.4"/>
<path d="M1855.50 1059.70h9l-4.50 5.6z" fill="#444"/>
<path d="M1887.6 1062.5h12.6m-6.3-6.3v12.6" stroke="#222" stroke-width="1.4"/>
<g fill="none" stroke="#1b86d9" stroke-width="1.35"><path d="M29.3 86.0l9.2-8.6a7.6 7.6 0 0 0-10.6-10.8l-8 8.4"/><path d="M19.5 68.0v8.8h8.8"/></g>
<g fill="none" stroke="#1b86d9" stroke-width="1.35"><path d="M30.700000000000003 127.0l-9.2-8.6a7.6 7.6 0 0 1 10.6-10.8l8 8.4"/><path d="M40.5 109.0v8.8h-8.8"/></g>
<g><path d="M95.2 95h-9.6a1 1 0 0 1-1-1v-18.200a1 1 0 0 1 1-1h16.200a1 1 0 0 1 1 1v7" fill="#fafafa" stroke="#f29222" stroke-width="1.5"/><path d="M89.4 75.600h8.600" stroke="#222" stroke-width="2"/><path d="M91.6 74.6q2.100-3.400 4.200 0" stroke="#222" stroke-width="1.200" fill="none"/><path d="M95.8 83.6h6.600l3.900 3.900v8.900h-10.500z" fill="#fafafa" stroke="#333" stroke-width="1.400" stroke-linejoin="round"/><path d="M102.2 83.800v3.900h3.900" fill="none" stroke="#333" stroke-width="1.200"/></g>
<path d="M128.70 92.40h8.8l-4.40 5.6z" fill="#222"/>
<g fill="none"><path d="M160 64.800l10.600 17M173.800 64.800l-10.600 17" stroke="#222" stroke-width="1.400"/><circle cx="159.700" cy="84.100" r="2.800" stroke="#1b86d9" stroke-width="1.400"/><circle cx="174.100" cy="84.100" r="2.800" stroke="#1b86d9" stroke-width="1.400"/></g>
<g><path d="M205.500 63.400a1.900 1.900 0 0 1 3.800 0v8.400h3.200a2 2 0 0 1 2 2v4.600h-14.200v-4.600a2 2 0 0 1 2-2h3.200z" fill="#fff" stroke="#333" stroke-width="1.400" stroke-linejoin="round"/><path d="M200.500 79.400h13.800l1 7.600h-16z" fill="#fbd9a0" stroke="#f2882a" stroke-width="1.400" stroke-linejoin="round"/><path d="M200 82.600q7 2.600 15-.4" stroke="#f2882a" stroke-width="1.300" fill="none"/></g>
<g stroke-linejoin="round"><path d="M155.600 105h7.600l4 4v16h-11.600z" fill="#fafafa" stroke="#444" stroke-width="1.300"/><path d="M157.800 116.200h6M157.800 119.400h6" stroke="#1b86d9" stroke-width="1.300"/><path d="M165 111.400h8.200l5 5v11.600h-13.200z" fill="#fafafa" stroke="#444" stroke-width="1.400"/><path d="M173 111.600v5h5" fill="none" stroke="#444" stroke-width="1.200"/><path d="M167.600 120.600h8.200M167.600 124h8.200" stroke="#1b86d9" stroke-width="1.300"/></g>
<g><path d="M199.600 123l5.600-15h1.400l4 15M201.800 118h8" fill="none" stroke="#222" stroke-width="1.500"/><path d="M196.200 125.300h8" stroke="#222" stroke-width="1.200"/><path d="M205.800 124.800l9.400-8.400l3.800 4.200l-9.400 8.400z" fill="#dc1c1c"/><path d="M211.200 120l4-3.600l3.800 4.200l-4 3.600z" fill="#f59aa5"/></g>
<g fill="none"><path d="M273.600 93.100h-10.700a1 1 0 0 1-1-1v-18.600a1 1 0 0 1 1-1h21.700a1 1 0 0 1 1 1v10.500" stroke="#7a7a7a" stroke-width="1.500"/><path d="M273.800 91.300h13.600M280.600 84.500v13.600" stroke="#2a6cc0" stroke-width="2"/></g>
<path d="M310.00 92.40h8.8l-4.40 5.6z" fill="#222"/>
<g><rect x="336.900" y="66.900" width="22.200" height="17.400" rx="1.2" fill="#fff" stroke="#333" stroke-width="1.400"/><path d="M340 70.800h16.200" stroke="#222" stroke-width="1.500"/><rect x="340" y="74.600" width="6.800" height="6.600" fill="#7a7a7a"/><rect x="349.400" y="74.600" width="6.800" height="6.600" fill="#7a7a7a"/></g>
<path d="M370.00 71.90h8.8l-4.40 5.6z" fill="#222"/>
<g><path d="M336.900 114v10.600a1 1 0 0 0 1 1h20.200a1 1 0 0 0 1-1v-15.800a1 1 0 0 0-1-1h-12" fill="#fff" stroke="#333" stroke-width="1.400"/><path d="M347 111.400h9.200" stroke="#555" stroke-width="1.500"/><path d="M340 122.200v-4l6.800-3.400v7.400z" fill="#7a7a7a"/><rect x="349.400" y="115.200" width="6.800" height="7" fill="#7a7a7a"/><path d="M339.500 114.800l4-4a3.600 3.600 0 0 0-5.400-4.800l-3.600 3.400" fill="none" stroke="#1b86d9" stroke-width="1.200"/><path d="M334 105.600v4.400h4.400" fill="none" stroke="#1b86d9" stroke-width="1.200"/></g>
<g fill="none" stroke="#6a6a6a" stroke-width="1.15"><path d="M370.4 139.0h-3.6v8.2h8.2v-3.6"/><path d="M370.6 143.4l5-5m-3.8 -.2h3.9v3.9"/></g>
<path d="M637.40 70.40h9.4l-4.70 6z" fill="#222"/>
<path d="M746.50 70.40h9.4l-4.70 6z" fill="#222"/>
<path d="M493 124.500h14.800" stroke="#1b86d9" stroke-width="1.400"/>
<path d="M532.900 113.500h16.900" stroke="#1b86d9" stroke-width="1.300"/>
<g><path d="M662.5 114.89999999999999l8.600-8.800l3.200 3.200l-8.600 8.800z" fill="#fff" stroke="#222" stroke-width="1.200" stroke-linejoin="round"/><path d="M662.1 115.3l3 3l-5.400 1.800z" fill="#222"/></g>
<rect x="652.2" y="124.1" width="23" height="4" rx="2" fill="#fff" stroke="#bdbdbd" stroke-width="1"/>
<path d="M685.60 111.20h8.8l-4.40 5.6z" fill="#222"/>
<path d="M745.60 111.20h8.8l-4.40 5.6z" fill="#222"/>
<g fill="none" stroke="#6a6a6a" stroke-width="1.15"><path d="M835.8 137.89999999999998h-3.6v8.2h8.2v-3.6"/><path d="M836.0 142.29999999999998l5-5m-3.8 -.2h3.9v3.9"/></g>
<path d="M798.80 73.00L798.80 60.80M803.10 65.10L798.80 60.80L794.50 65.10" stroke="#1b86d9" stroke-width="1.3" fill="none"/>
<path d="M839.60 61.50L839.60 73.80M835.30 69.50L839.60 73.80L843.90 69.50" stroke="#1b86d9" stroke-width="1.3" fill="none"/>
<circle cx="874.700" cy="63.5" r="2" fill="none" stroke="#1565c0" stroke-width="1.300"/>
<circle cx="874.700" cy="73.1" r="2" fill="none" stroke="#1565c0" stroke-width="1.300"/>
<circle cx="874.700" cy="82.8" r="2" fill="none" stroke="#1565c0" stroke-width="1.300"/>
<path d="M879.00 61.90h17.20M879.00 65.30h10.00M879.00 71.50h17.20M879.00 74.80h10.00M879.00 81.00h17.20M879.00 84.40h10.00" stroke="#3b3b3b" stroke-width="1.35" fill="none"/>
<path d="M920.00 61.90h17.20M920.00 65.30h10.00M920.00 71.50h17.20M920.00 74.80h10.00M920.00 81.00h17.20M920.00 84.40h10.00" stroke="#3b3b3b" stroke-width="1.35" fill="none"/>
<path d="M957 60.700h22.300M966.400 66.600h12.900M966.400 72.500h12.900M966.400 78.500h12.900M957 84.500h22.300" stroke="#3b3b3b" stroke-width="1.350" fill="none"/>
<path d="M953.30 72.50L963.80 72.50M958.60 77.70L963.80 72.50L958.60 67.30" stroke="#1b86d9" stroke-width="1.3" fill="none"/>
<path d="M997.500 60.700h22.500M1007.200 66.600h12.800M1007.200 72.500h12.800M1007.200 78.500h12.800M997.500 84.500h22.500" stroke="#3b3b3b" stroke-width="1.350" fill="none"/>
<path d="M1004.40 72.50L994.00 72.50M999.20 67.30L994.00 72.50L999.20 77.70" stroke="#1b86d9" stroke-width="1.3" fill="none"/>
<path d="M1036.20 80.00L1046.20 80.00M1041.00 85.20L1046.20 80.00L1041.00 74.80" stroke="#1b86d9" stroke-width="1.3" fill="none"/>
<path d="M1100.20 80.00L1090.20 80.00M1095.40 74.80L1090.20 80.00L1095.40 85.20" stroke="#1b86d9" stroke-width="1.3" fill="none"/>
<path d="M873.70 102.50h21.40M873.70 106.00h13.20M873.70 112.10h21.40M873.70 115.60h13.20M873.70 121.90h21.40M873.70 125.40h13.20" stroke="#3b3b3b" stroke-width="1.35" fill="none"/>
<path d="M914.40 102.50h21.60M919.40 106.00h11.60M914.40 112.10h21.60M919.40 115.60h11.60M914.40 121.90h21.60M919.40 125.40h11.60" stroke="#3b3b3b" stroke-width="1.35" fill="none"/>
<path d="M955.00 102.50h21.40M963.20 106.00h13.20M955.00 112.10h21.40M963.20 115.60h13.20M955.00 121.90h21.40M963.20 125.40h13.20" stroke="#3b3b3b" stroke-width="1.35" fill="none"/>
<path d="M996.00 102.50h21.50M996.00 106.00h21.50M996.00 112.10h21.50M996.00 115.60h21.50M996.00 121.90h21.50M996.00 125.40h21.50" stroke="#3b3b3b" stroke-width="1.35" fill="none"/>
<path d="M1039.80 114.00L1039.80 102.70M1045.00 107.90L1039.80 102.70L1034.60 107.90" stroke="#1b86d9" stroke-width="1.3" fill="none"/>
<path d="M1039.80 114.00L1039.80 125.40M1034.60 120.20L1039.80 125.40L1045.00 120.20" stroke="#1b86d9" stroke-width="1.3" fill="none"/>
<path d="M1046.900 107.500h12.500M1046.900 112.200h12.500M1046.900 117.100h12.500M1046.900 121.900h12.500" stroke="#3b3b3b" stroke-width="1.350" fill="none"/>
<path d="M1069.40 111.20h8.8l-4.40 5.6z" fill="#222"/>
<g fill="none" stroke="#6a6a6a" stroke-width="1.15"><path d="M1091.2 137.89999999999998h-3.6v8.2h8.2v-3.6"/><path d="M1091.3999999999999 142.29999999999998l5-5m-3.8 -.2h3.9v3.9"/></g>
<path d="M1129 61.900h22M1129 65.300h13M1129 71.500h22" stroke="#3b3b3b" stroke-width="1.350" fill="none"/>
<path d="M1139.60 86.40L1139.60 74.60M1143.90 78.90L1139.60 74.60L1135.30 78.90" stroke="#1b86d9" stroke-width="1.3" fill="none"/>
<path d="M1180.30 60.00L1180.30 69.60M1176.00 65.30L1180.30 69.60L1184.60 65.30" stroke="#1b86d9" stroke-width="1.3" fill="none"/>
<path d="M1170 71.500h21.500M1170 75h13" stroke="#3b3b3b" stroke-width="1.350" fill="none"/>
<path d="M1180.30 86.40L1180.30 77.40M1184.60 81.70L1180.30 77.40L1176.00 81.70" stroke="#1b86d9" stroke-width="1.3" fill="none"/>
<path d="M1221.00 60.00L1221.00 72.00M1216.70 67.70L1221.00 72.00L1225.30 67.70" stroke="#1b86d9" stroke-width="1.3" fill="none"/>
<path d="M1211 75h12.800M1211 81h21.300M1211 84.400h12.800" stroke="#3b3b3b" stroke-width="1.350" fill="none"/>
<g><path d="M1131 114.700h9" stroke="#222" stroke-width="1.300"/><path d="M1131 119.800h18" stroke="#111" stroke-width="2.400"/><rect x="1129" y="124.300" width="22" height="3.400" rx="1.700" fill="#0d2340"/><path d="M1138.600 110.800v-6.400q3-1.600 5.600-.8" fill="none" stroke="#2a6cc0" stroke-width="2"/><path d="M1143.600 105.400l5.600-2.200l3 7l-5.600 2.400z" fill="#fff" stroke="#444" stroke-width="1.100"/><path d="M1146.600 104.200a2 2 0 0 1 3.600-1.400v2.600" fill="none" stroke="#444" stroke-width="1.100"/></g>
<path d="M1161.90 111.20h8.8l-4.40 5.6z" fill="#222"/>
<g><rect x="1189" y="124.300" width="22.300" height="3.400" rx="1.700" fill="#4a80d0"/><path d="M1193.400 115v-9.600q3-2 6.400-1" fill="none" stroke="#2a6cc0" stroke-width="2.200"/><path d="M1197.600 105.600l8-3l4 9.400l-8 3.400z" fill="#fff" stroke="#444" stroke-width="1.200"/><path d="M1201.600 104.200a2.400 2.400 0 0 1 4.600-1.600v3" fill="none" stroke="#444" stroke-width="1.100"/></g>
<path d="M1221.90 111.20h8.8l-4.40 5.6z" fill="#222"/>
<circle cx="1273.100" cy="75.600" r="11.500" fill="#e9ecf3" stroke="#2b3a5c" stroke-width="1.300"/>
<path d="M1363.70 71.90h8.8l-4.40 5.6z" fill="#222"/>
<g fill="none" stroke="#1b86d9" stroke-width="1.300"><circle cx="1265" cy="107.900" r="1.900"/><circle cx="1281.600" cy="125" r="1.900"/><path d="M1266.900 108.300c3-.2 4.400 1 5.400 4l3 9c.8 2.400 2 3.600 4.400 3.700"/></g>
<path d="M1397.10 112.60h8.8l-4.40 5.6z" fill="#222"/>
<g><rect x="1424" y="64.400" width="22.600" height="22.200" rx=".8" fill="#fafafa" stroke="#333" stroke-width="1.300"/><circle cx="1430" cy="70.200" r="2.200" fill="#fbe9a8" stroke="#f0902a" stroke-width="1.100"/><path d="M1425.200 86l8.400-8l3.200 3.200l3.600-5.600l6.200 6.400v4z" fill="#8cc4f0"/><path d="M1425.200 86l8.400-8l3.400 3.400M1428.800 86l11.600-10.400l6.200 6.400" fill="none" stroke="#1c6fc4" stroke-width="1.100"/></g>
<path d="M1457.10 71.90h8.8l-4.40 5.6z" fill="#222"/>
<rect x="1484" y="64.400" width="22.600" height="22.200" rx="1" fill="#fafafa" stroke="#555" stroke-width="1.300"/>
<rect x="1486.4" y="66.6" width="4" height="4" fill="#3c6eb4"/>
<rect x="1493.5" y="66.6" width="4" height="4" fill="#7fbcf2"/>
<rect x="1500.6" y="66.6" width="4" height="4" fill="#7fbcf2"/>
<rect x="1486.4" y="73.7" width="4" height="4" fill="#7fbcf2"/>
<rect x="1493.5" y="73.7" width="4" height="4" fill="#7fbcf2"/>
<rect x="1500.6" y="73.7" width="4" height="4" fill="#7fbcf2"/>
<rect x="1486.4" y="80.8" width="4" height="4" fill="#7fbcf2"/>
<rect x="1493.5" y="80.8" width="4" height="4" fill="#7fbcf2"/>
<rect x="1500.6" y="80.8" width="4" height="4" fill="#7fbcf2"/>
<path d="M1517.10 71.90h8.8l-4.40 5.6z" fill="#222"/>
<g><rect x="1422.800" y="105" width="24.800" height="22.600" rx=".8" fill="#fafafa" stroke="#666" stroke-width="1.200"/><path d="M1438.600 110.200h6.400M1438.600 114.400h6.400M1438.600 118.600h6.400M1425.200 124h19.800" stroke="#999" stroke-width="1.100"/></g>
<path d="M1425 122.400h12" stroke="#2a6cc0" stroke-width="1"/>
<g><rect x="1464.600" y="110.900" width="5.800" height="17.100" rx=".8" fill="#3a4a68"/><rect x="1472.900" y="104.600" width="6.100" height="23.400" rx=".8" fill="#3f84c6"/><rect x="1481.600" y="114.400" width="5.900" height="13.600" rx=".8" fill="#3a4a68"/></g>
<g fill="none"><circle cx="1569" cy="70" r="8.300" stroke="#222" stroke-width="1.300" fill="#fff"/><path d="M1562.600 76.600l-8 8.200" stroke="#222" stroke-width="3" stroke-linecap="round"/></g>
<g fill="none"><circle cx="1569" cy="110.900" r="8.300" stroke="#222" stroke-width="1.300" fill="#fff"/><path d="M1562.600 117.500l-8 8.200" stroke="#222" stroke-width="3" stroke-linecap="round"/></g>
<path d="M263.400 188l15.600 15.400M279 188l-15.600 15.400" stroke="#222" stroke-width="1.400" fill="none"/>
<path d="M296.800 990.500h6.600l-3.300 4.200z" fill="#d0d0d0"/>
<path d="M297.400 282.500l1.600-3.400l1.600 3.400" fill="none" stroke="#e0e0e0" stroke-width="1"/>
<g><circle cx="23.800" cy="1018.700" r="10.900" fill="#74b9f0" stroke="#1273c8" stroke-width="1.700"/><path d="M20.200 1012.800l9.400 5.900l-9.400 5.900z" fill="#fff" stroke="#1273c8" stroke-width="1.400" stroke-linejoin="round"/></g>
<g fill="none"><path d="M111.400 1028h-10.400a1 1 0 0 1-1-1v-18.400a1 1 0 0 1 1-1h21.300a1 1 0 0 1 1 1v11" stroke="#7a7a7a" stroke-width="1.400"/><path d="M111.800 1025.900h13.800M118.700 1019v13.800" stroke="#2a6cc0" stroke-width="2"/></g>
<g fill="#fff" stroke="#7a7a7a" stroke-width="1.400"><rect x="188.900" y="1007.600" width="19.600" height="16.900" rx="1.400"/><rect x="193" y="1013.300" width="19.200" height="16.800" rx="1.400"/></g>
<g fill="none"><path d="M288 1028h-10.800a1 1 0 0 1-1-1v-18.400a1 1 0 0 1 1-1h21.600a1 1 0 0 1 1 1v11" stroke="#7a7a7a" stroke-width="1.400"/><path d="M290.300 1020.800l10 10M300.300 1020.800l-10 10" stroke="#e0627f" stroke-width="2.600"/></g>
<path d="M1910 165.800l4-5l4 5z" fill="#a9a9a9"/><path d="M1910 1034.200l4 5l4-5z" fill="#a9a9a9"/>
<path d="M1525.3 213.4l5 5l5-5" fill="none" stroke="#222" stroke-width="1.400"/>
<g fill="none" stroke="#3a3a3a" stroke-width="1.500"><path d="M1877.6000000000001 210.8h-4.600v10.400h10.400v-4.600"/><path d="M1877.2 217l6.200-6.200m-4.600 -.400h5v5"/></g>
<path d="M1729.30 260.10h9.4l-4.70 6z" fill="#222"/>
<path d="M1838.20 260.10h9.4l-4.70 6z" fill="#222"/>
<path d="M1615 311.300h14.800" stroke="#1b86d9" stroke-width="1.400"/>
<path d="M1644.40 298.40h9.4l-4.70 6z" fill="#222"/>
<path d="M1673 300.700h16.600" stroke="#1b86d9" stroke-width="1.300"/>
<g><path d="M1766.400 307.400l5.600-15h1.400l4 15M1768.600 302.400h8" fill="none" stroke="#222" stroke-width="1.500"/><path d="M1763 310.300h8" stroke="#222" stroke-width="1.200"/><path d="M1772.600 309.200l9.400-8.400l3.800 4.200l-9.400 8.400z" fill="#dc1c1c"/><path d="M1778 304.400l4-3.600l3.800 4.200l-4 3.600z" fill="#f59aa5"/></g>
<path d="M1821.30 300.60L1821.30 288.60M1825.60 292.90L1821.30 288.60L1817.00 292.90" stroke="#1b86d9" stroke-width="1.3" fill="none"/>
<path d="M1860.60 289.40L1860.60 301.80M1856.30 297.50L1860.60 301.80L1864.90 297.50" stroke="#1b86d9" stroke-width="1.3" fill="none"/>
<rect x="1532" y="358.700" width="23" height="4.800" rx="2.400" fill="#0f2d2d" stroke="#fff" stroke-width="1.200"/>
<path d="M1564.70 346.60h9.4l-4.70 6z" fill="#222"/>
<g><path d="M1597.2 350.3l8.600-8.800l3.200 3.200l-8.600 8.800z" fill="#fff" stroke="#222" stroke-width="1.200" stroke-linejoin="round"/><path d="M1596.8 350.7l3 3l-5.400 1.800z" fill="#222"/></g>
<rect x="1586.9" y="359.5" width="23" height="4" rx="2" fill="#fff" stroke="#bdbdbd" stroke-width="1"/>
<path d="M1620.10 346.60h9.4l-4.70 6z" fill="#222"/>
<path d="M1642.400 357h23M1646 353.400l-3.600 3.600l3.600 3.600M1661.800 353.400l3.600 3.600l-3.600 3.600" stroke="#1b86d9" stroke-width="1.300" fill="none"/>
<path d="M1675.30 346.60h9.4l-4.70 6z" fill="#222"/>
<path d="M1525.3 422.2l5 5l5-5" fill="none" stroke="#222" stroke-width="1.400"/>
<g fill="none" stroke="#3a3a3a" stroke-width="1.500"><path d="M1877.6000000000001 419.6h-4.600v10.400h10.400v-4.600"/><path d="M1877.2 425.8l6.200-6.200m-4.600 -.400h5v5"/></g>
<circle cx="1533.500" cy="465.6" r="2" fill="none" stroke="#1565c0" stroke-width="1.300"/>
<circle cx="1533.500" cy="475.25" r="2" fill="none" stroke="#1565c0" stroke-width="1.300"/>
<circle cx="1533.500" cy="484.8" r="2" fill="none" stroke="#1565c0" stroke-width="1.300"/>
<path d="M1537.50 463.50h17.50M1537.50 466.90h10.20M1537.50 473.25h17.50M1537.50 476.60h10.20M1537.50 483.10h17.50M1537.50 486.50h10.20" stroke="#3b3b3b" stroke-width="1.35" fill="none"/>
<path d="M1564.90 472.40h9.4l-4.70 6z" fill="#222"/>
<path d="M1596.30 463.50h17.50M1596.30 466.90h10.20M1596.30 473.25h17.50M1596.30 476.60h10.20M1596.30 483.10h17.50M1596.30 486.50h10.20" stroke="#3b3b3b" stroke-width="1.35" fill="none"/>
<path d="M1623.70 472.40h9.4l-4.70 6z" fill="#222"/>
<path d="M1688.50 474.60L1712.30 474.60M1704.70 482.20L1712.30 474.60L1704.70 467.00" stroke="#1b86d9" stroke-width="1.3" fill="none"/>
<path d="M1752.00 474.60L1728.20 474.60M1735.80 467.00L1728.20 474.60L1735.80 482.20" stroke="#9a9a9a" stroke-width="1.3" fill="none"/>
<path d="M1780.00 463.00L1780.00 487.00M1772.40 479.40L1780.00 487.00L1787.60 479.40" stroke="#9a9a9a" stroke-width="1.3" fill="none"/>
<path d="M1819.80 487.00L1819.80 463.00M1827.40 470.60L1819.80 463.00L1812.20 470.60" stroke="#9a9a9a" stroke-width="1.3" fill="none"/>
<path d="M1525.3 542.2l5 5l5-5" fill="none" stroke="#222" stroke-width="1.400"/>
<g fill="none" stroke="#3a3a3a" stroke-width="1.500"><path d="M1877.6000000000001 539.5999999999999h-4.600v10.400h10.400v-4.600"/><path d="M1877.2 545.8l6.200-6.200m-4.600 -.400h5v5"/></g>
<path d="M1532.50 583.75h21.50M1532.50 587.25h13.10M1532.50 593.40h21.50M1532.50 597.00h13.10M1532.50 603.10h21.50M1532.50 606.60h13.10" stroke="#3b3b3b" stroke-width="1.35" fill="none"/>
<path d="M1572.10 583.75h21.60M1577.00 587.25h11.80M1572.10 593.40h21.60M1577.00 597.00h11.80M1572.10 603.10h21.60M1577.00 606.60h11.80" stroke="#3b3b3b" stroke-width="1.35" fill="none"/>
<path d="M1611.60 583.75h21.40M1620.00 587.25h13.00M1611.60 593.40h21.40M1620.00 597.00h13.00M1611.60 603.10h21.40M1620.00 606.60h13.00" stroke="#3b3b3b" stroke-width="1.35" fill="none"/>
<path d="M1651.30 583.75h21.60M1651.30 587.25h21.60M1651.30 593.40h21.60M1651.30 597.00h21.60M1651.30 603.10h21.60M1651.30 606.60h21.60" stroke="#3b3b3b" stroke-width="1.35" fill="none"/>
<path d="M1803.20 602.30L1813.20 602.30M1808.00 607.50L1813.20 602.30L1808.00 597.10" stroke="#1b86d9" stroke-width="1.3" fill="none"/>
<path d="M1867.20 602.30L1857.20 602.30M1862.40 597.10L1857.20 602.30L1862.40 607.50" stroke="#1b86d9" stroke-width="1.3" fill="none"/>
<path d="M1532.500 629.100h21.500M1532.500 632.800h13.100M1532.500 639h21.500" stroke="#3b3b3b" stroke-width="1.350" fill="none"/>
<path d="M1542.80 653.80L1542.80 642.40M1547.10 646.70L1542.80 642.40L1538.50 646.70" stroke="#1b86d9" stroke-width="1.3" fill="none"/>
<path d="M1582.30 627.50L1582.30 636.70M1578.00 632.40L1582.30 636.70L1586.60 632.40" stroke="#1b86d9" stroke-width="1.3" fill="none"/>
<path d="M1572.100 639h21.600M1572.100 642.500h13.200" stroke="#3b3b3b" stroke-width="1.350" fill="none"/>
<path d="M1582.30 653.80L1582.30 644.90M1586.60 649.20L1582.30 644.90L1578.00 649.20" stroke="#1b86d9" stroke-width="1.3" fill="none"/>
<path d="M1621.90 627.50L1621.90 639.20M1617.60 634.90L1621.90 639.20L1626.20 634.90" stroke="#1b86d9" stroke-width="1.3" fill="none"/>
<path d="M1611.600 642.500h13.200M1611.600 648.500h21.400M1611.600 652.100h13.200" stroke="#3b3b3b" stroke-width="1.350" fill="none"/>
<path d="M1532.500 712.300h11.900M1532.500 715.900h11.900M1532.500 728.500h11.900M1532.500 732.100h11.900" stroke="#3b3b3b" stroke-width="1.350" fill="none"/>
<path d="M1551.00 720.00L1551.00 710.00M1556.20 715.20L1551.00 710.00L1545.80 715.20" stroke="#1b86d9" stroke-width="1.3" fill="none"/>
<path d="M1551.00 725.00L1551.00 735.00M1545.80 729.80L1551.00 735.00L1556.20 729.80" stroke="#1b86d9" stroke-width="1.3" fill="none"/>
<path d="M1572.100 716.900h11.700M1572.100 720.300h11.700M1572.100 726.900h11.700M1572.100 730.400h11.700" stroke="#3b3b3b" stroke-width="1.350" fill="none"/>
<path d="M1590.60 709.80L1590.60 719.80M1585.40 714.60L1590.60 719.80L1595.80 714.60" stroke="#1b86d9" stroke-width="1.3" fill="none"/>
<path d="M1590.60 735.00L1590.60 725.00M1595.80 730.20L1590.60 725.00L1585.40 730.20" stroke="#1b86d9" stroke-width="1.3" fill="none"/>
<path d="M1712.300 711h22.700M1722.500 717h12.500M1722.500 723h12.500M1722.500 729h12.500M1712.300 735h22.700" stroke="#3b3b3b" stroke-width="1.350" fill="none"/>
<path d="M1709.00 723.00L1719.60 723.00M1714.40 728.20L1719.60 723.00L1714.40 717.80" stroke="#1b86d9" stroke-width="1.3" fill="none"/>
<path d="M1752.100 711h22.700M1761.900 717h12.900M1761.900 723h12.900M1761.900 729h12.900M1752.100 735h22.700" stroke="#3b3b3b" stroke-width="1.350" fill="none"/>
<path d="M1759.20 723.00L1748.60 723.00M1753.80 717.80L1748.60 723.00L1753.80 728.20" stroke="#1b86d9" stroke-width="1.3" fill="none"/>
<path d="M1791.600 711h22.800M1801.300 717h13.100M1801.300 723h13.100M1801.300 729h13.100M1801.300 735h13.100" stroke="#3b3b3b" stroke-width="1.350" fill="none"/>
<path d="M1788.00 723.00L1798.60 723.00M1793.40 728.20L1798.60 723.00L1793.40 717.80" stroke="#1b86d9" stroke-width="1.3" fill="none"/>
<path d="M1654.2 755.8h9.600l-4.800-6.600z" fill="#b4b4b4"/><path d="M1654.2 768.0h9.600l-4.800 6.600z" fill="#b4b4b4"/>
<path d="M1654.2 794.1999999999999h9.600l-4.800-6.600z" fill="#b4b4b4"/><path d="M1654.2 806.4h9.600l-4.800 6.600z" fill="#b4b4b4"/>
<path d="M1833.1 756.6999999999999h9.600l-4.800-6.600z" fill="#b4b4b4"/><path d="M1833.1 768.9h9.600l-4.800 6.600z" fill="#b4b4b4"/>
<path d="M1833.1 795.4h9.600l-4.800-6.600z" fill="#b4b4b4"/><path d="M1833.1 807.6h9.600l-4.800 6.600z" fill="#b4b4b4"/>
<path d="M1833.1 834.8h9.600l-4.800-6.600z" fill="#b4b4b4"/><path d="M1833.1 847.0h9.600l-4.800 6.600z" fill="#b4b4b4"/>
<path d="M1539.7 753.5h5.600M1539.7 763h5.600M1542.5 753.5v9.5" stroke="#1b86d9" stroke-width="1.400" fill="none"/>
<path d="M1533.500 765h16.900M1533.500 768.700h16.900" stroke="#3b3b3b" stroke-width="1.350" fill="none"/>
<path d="M1533.500 792.500h16.900M1533.500 796h16.900" stroke="#3b3b3b" stroke-width="1.350" fill="none"/>
<path d="M1539.7 799.6h5.600M1539.7 808.6h5.600M1542.5 799.6v9.0" stroke="#1b86d9" stroke-width="1.400" fill="none"/>
<path d="M1535.30 840.00L1535.30 828.20M1540.50 833.40L1535.30 828.20L1530.10 833.40" stroke="#1b86d9" stroke-width="1.3" fill="none"/>
<path d="M1535.30 840.00L1535.30 851.80M1530.10 846.60L1535.30 851.80L1540.50 846.60" stroke="#1b86d9" stroke-width="1.3" fill="none"/>
<path d="M1542.300 833.500h13M1542.300 838.100h13M1542.300 842.900h13M1542.300 847.700h13" stroke="#3b3b3b" stroke-width="1.350" fill="none"/>
<path d="M1564.90 837.30h9.4l-4.70 6z" fill="#222"/>
<path d="M1713.800 758h16.600M1724 761.900h6.400M1724 765.300h6.400M1713.800 768.800h16.600" stroke="#3b3b3b" stroke-width="1.350" fill="none"/>
<path d="M1711.6 760.7v6M1720.8 760.7v6M1711.6 763.7h9.200000000000045" stroke="#1b86d9" stroke-width="1.500" fill="none"/>
<path d="M1712.300 795.900h17.100M1712.300 800h7.100M1712.300 803.500h7.100M1712.300 807.100h17.100" stroke="#3b3b3b" stroke-width="1.350" fill="none"/>
<path d="M1721 799.2v6M1730.2 799.2v6M1721 802.2h9.200000000000045" stroke="#1b86d9" stroke-width="1.500" fill="none"/>
<path d="M1711.6 831.7v6M1720.8 831.7v6M1711.6 834.7h9.200000000000045" stroke="#1b86d9" stroke-width="1.500" fill="none"/>
<path d="M1722.300 835.600h7.100M1712.300 840.600h12.100M1712.300 844.100h17.100M1712.300 847.700h12.100" stroke="#3b3b3b" stroke-width="1.350" fill="none"/>
</svg>
</body></html>
